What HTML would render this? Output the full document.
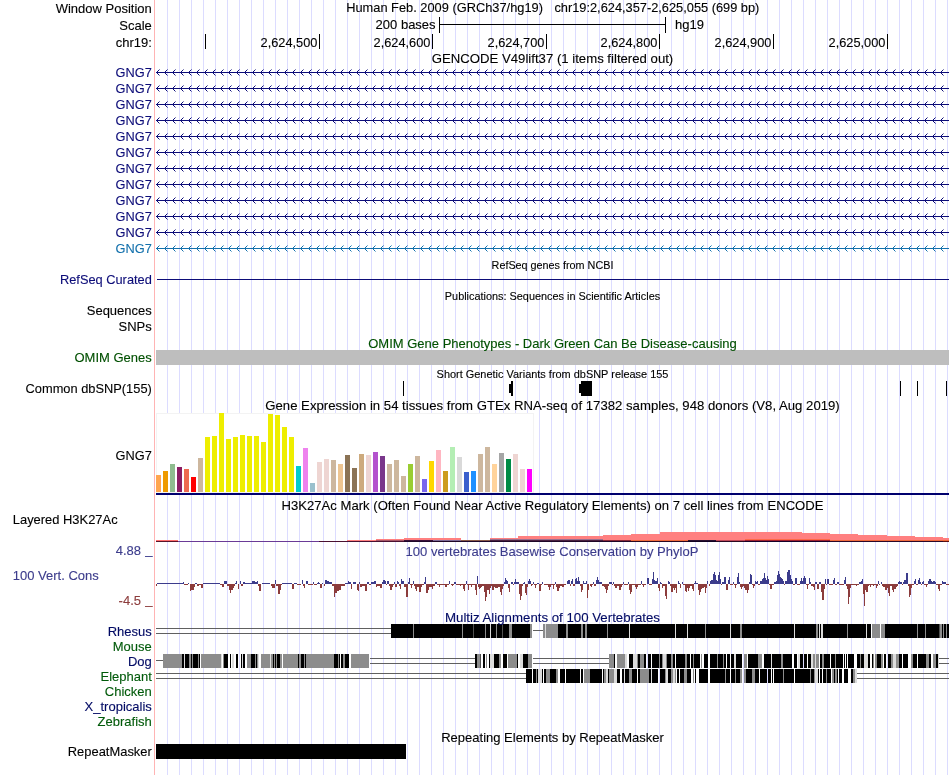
<!DOCTYPE html>
<html lang="en"><head><meta charset="utf-8"><title>UCSC Genome Browser - chr19:2,624,357-2,625,055</title>
<style>html,body{margin:0;padding:0;background:#fff}svg{display:block}text{font-family:"Liberation Sans", Arial, Helvetica, sans-serif;white-space:pre;stroke-width:0.12px}.c{shape-rendering:crispEdges}</style></head><body>
<svg width="950" height="775" viewBox="0 0 950 775">
<rect width="950" height="775" fill="#fff"/>
<g class="c">
<rect x="154" y="0" width="1" height="775" fill="#ffb4b4"/>
<path d="M167.5 0V775M179.5 0V775M191.5 0V775M203.5 0V775M215.5 0V775M227.5 0V775M239.5 0V775M251.5 0V775M263.5 0V775M275.5 0V775M287.5 0V775M299.5 0V775M311.5 0V775M323.5 0V775M335.5 0V775M347.5 0V775M359.5 0V775M371.5 0V775M383.5 0V775M395.5 0V775M407.5 0V775M419.5 0V775M431.5 0V775M443.5 0V775M455.5 0V775M467.5 0V775M479.5 0V775M491.5 0V775M503.5 0V775M515.5 0V775M527.5 0V775M539.5 0V775M551.5 0V775M563.5 0V775M575.5 0V775M587.5 0V775M599.5 0V775M611.5 0V775M623.5 0V775M635.5 0V775M647.5 0V775M659.5 0V775M671.5 0V775M683.5 0V775M695.5 0V775M707.5 0V775M719.5 0V775M731.5 0V775M743.5 0V775M755.5 0V775M767.5 0V775M779.5 0V775M791.5 0V775M803.5 0V775M815.5 0V775M827.5 0V775M839.5 0V775M851.5 0V775M863.5 0V775M875.5 0V775M887.5 0V775M899.5 0V775M911.5 0V775M923.5 0V775M935.5 0V775M947.5 0V775" stroke="#dcdcff" stroke-width="1" fill="none"/>
</g>
<g class="c">
<rect x="439" y="17" width="1" height="16" fill="#000"/>
<rect x="665" y="17" width="1" height="16" fill="#000"/>
<rect x="439" y="24" width="227" height="1" fill="#000"/>
<rect x="205" y="34" width="1" height="15" fill="#000"/>
<rect x="319" y="34" width="1" height="15" fill="#000"/>
<rect x="432" y="34" width="1" height="15" fill="#000"/>
<rect x="546" y="34" width="1" height="15" fill="#000"/>
<rect x="659" y="34" width="1" height="15" fill="#000"/>
<rect x="773" y="34" width="1" height="15" fill="#000"/>
<rect x="887" y="34" width="1" height="15" fill="#000"/>
</g>
<rect class="c" x="156" y="72" width="793" height="1" fill="#0c0c78"/>
<path d="M159.5 69.5L156.5 72.5L159.5 75.5M167.5 69.5L164.5 72.5L167.5 75.5M175.5 69.5L172.5 72.5L175.5 75.5M183.5 69.5L180.5 72.5L183.5 75.5M191.5 69.5L188.5 72.5L191.5 75.5M199.5 69.5L196.5 72.5L199.5 75.5M207.5 69.5L204.5 72.5L207.5 75.5M215.5 69.5L212.5 72.5L215.5 75.5M223.5 69.5L220.5 72.5L223.5 75.5M231.5 69.5L228.5 72.5L231.5 75.5M239.5 69.5L236.5 72.5L239.5 75.5M247.5 69.5L244.5 72.5L247.5 75.5M255.5 69.5L252.5 72.5L255.5 75.5M263.5 69.5L260.5 72.5L263.5 75.5M271.5 69.5L268.5 72.5L271.5 75.5M279.5 69.5L276.5 72.5L279.5 75.5M287.5 69.5L284.5 72.5L287.5 75.5M295.5 69.5L292.5 72.5L295.5 75.5M303.5 69.5L300.5 72.5L303.5 75.5M311.5 69.5L308.5 72.5L311.5 75.5M319.5 69.5L316.5 72.5L319.5 75.5M327.5 69.5L324.5 72.5L327.5 75.5M335.5 69.5L332.5 72.5L335.5 75.5M343.5 69.5L340.5 72.5L343.5 75.5M351.5 69.5L348.5 72.5L351.5 75.5M359.5 69.5L356.5 72.5L359.5 75.5M367.5 69.5L364.5 72.5L367.5 75.5M375.5 69.5L372.5 72.5L375.5 75.5M383.5 69.5L380.5 72.5L383.5 75.5M391.5 69.5L388.5 72.5L391.5 75.5M399.5 69.5L396.5 72.5L399.5 75.5M407.5 69.5L404.5 72.5L407.5 75.5M415.5 69.5L412.5 72.5L415.5 75.5M423.5 69.5L420.5 72.5L423.5 75.5M431.5 69.5L428.5 72.5L431.5 75.5M439.5 69.5L436.5 72.5L439.5 75.5M447.5 69.5L444.5 72.5L447.5 75.5M455.5 69.5L452.5 72.5L455.5 75.5M463.5 69.5L460.5 72.5L463.5 75.5M471.5 69.5L468.5 72.5L471.5 75.5M479.5 69.5L476.5 72.5L479.5 75.5M487.5 69.5L484.5 72.5L487.5 75.5M495.5 69.5L492.5 72.5L495.5 75.5M503.5 69.5L500.5 72.5L503.5 75.5M511.5 69.5L508.5 72.5L511.5 75.5M519.5 69.5L516.5 72.5L519.5 75.5M527.5 69.5L524.5 72.5L527.5 75.5M535.5 69.5L532.5 72.5L535.5 75.5M543.5 69.5L540.5 72.5L543.5 75.5M551.5 69.5L548.5 72.5L551.5 75.5M559.5 69.5L556.5 72.5L559.5 75.5M567.5 69.5L564.5 72.5L567.5 75.5M575.5 69.5L572.5 72.5L575.5 75.5M583.5 69.5L580.5 72.5L583.5 75.5M591.5 69.5L588.5 72.5L591.5 75.5M599.5 69.5L596.5 72.5L599.5 75.5M607.5 69.5L604.5 72.5L607.5 75.5M615.5 69.5L612.5 72.5L615.5 75.5M623.5 69.5L620.5 72.5L623.5 75.5M631.5 69.5L628.5 72.5L631.5 75.5M639.5 69.5L636.5 72.5L639.5 75.5M647.5 69.5L644.5 72.5L647.5 75.5M655.5 69.5L652.5 72.5L655.5 75.5M663.5 69.5L660.5 72.5L663.5 75.5M671.5 69.5L668.5 72.5L671.5 75.5M679.5 69.5L676.5 72.5L679.5 75.5M687.5 69.5L684.5 72.5L687.5 75.5M695.5 69.5L692.5 72.5L695.5 75.5M703.5 69.5L700.5 72.5L703.5 75.5M711.5 69.5L708.5 72.5L711.5 75.5M719.5 69.5L716.5 72.5L719.5 75.5M727.5 69.5L724.5 72.5L727.5 75.5M735.5 69.5L732.5 72.5L735.5 75.5M743.5 69.5L740.5 72.5L743.5 75.5M751.5 69.5L748.5 72.5L751.5 75.5M759.5 69.5L756.5 72.5L759.5 75.5M767.5 69.5L764.5 72.5L767.5 75.5M775.5 69.5L772.5 72.5L775.5 75.5M783.5 69.5L780.5 72.5L783.5 75.5M791.5 69.5L788.5 72.5L791.5 75.5M799.5 69.5L796.5 72.5L799.5 75.5M807.5 69.5L804.5 72.5L807.5 75.5M815.5 69.5L812.5 72.5L815.5 75.5M823.5 69.5L820.5 72.5L823.5 75.5M831.5 69.5L828.5 72.5L831.5 75.5M839.5 69.5L836.5 72.5L839.5 75.5M847.5 69.5L844.5 72.5L847.5 75.5M855.5 69.5L852.5 72.5L855.5 75.5M863.5 69.5L860.5 72.5L863.5 75.5M871.5 69.5L868.5 72.5L871.5 75.5M879.5 69.5L876.5 72.5L879.5 75.5M887.5 69.5L884.5 72.5L887.5 75.5M895.5 69.5L892.5 72.5L895.5 75.5M903.5 69.5L900.5 72.5L903.5 75.5M911.5 69.5L908.5 72.5L911.5 75.5M919.5 69.5L916.5 72.5L919.5 75.5M927.5 69.5L924.5 72.5L927.5 75.5M935.5 69.5L932.5 72.5L935.5 75.5M943.5 69.5L940.5 72.5L943.5 75.5" stroke="#0c0c78" stroke-width="1" fill="none"/>
<rect class="c" x="156" y="88" width="793" height="1" fill="#0c0c78"/>
<path d="M159.5 85.5L156.5 88.5L159.5 91.5M167.5 85.5L164.5 88.5L167.5 91.5M175.5 85.5L172.5 88.5L175.5 91.5M183.5 85.5L180.5 88.5L183.5 91.5M191.5 85.5L188.5 88.5L191.5 91.5M199.5 85.5L196.5 88.5L199.5 91.5M207.5 85.5L204.5 88.5L207.5 91.5M215.5 85.5L212.5 88.5L215.5 91.5M223.5 85.5L220.5 88.5L223.5 91.5M231.5 85.5L228.5 88.5L231.5 91.5M239.5 85.5L236.5 88.5L239.5 91.5M247.5 85.5L244.5 88.5L247.5 91.5M255.5 85.5L252.5 88.5L255.5 91.5M263.5 85.5L260.5 88.5L263.5 91.5M271.5 85.5L268.5 88.5L271.5 91.5M279.5 85.5L276.5 88.5L279.5 91.5M287.5 85.5L284.5 88.5L287.5 91.5M295.5 85.5L292.5 88.5L295.5 91.5M303.5 85.5L300.5 88.5L303.5 91.5M311.5 85.5L308.5 88.5L311.5 91.5M319.5 85.5L316.5 88.5L319.5 91.5M327.5 85.5L324.5 88.5L327.5 91.5M335.5 85.5L332.5 88.5L335.5 91.5M343.5 85.5L340.5 88.5L343.5 91.5M351.5 85.5L348.5 88.5L351.5 91.5M359.5 85.5L356.5 88.5L359.5 91.5M367.5 85.5L364.5 88.5L367.5 91.5M375.5 85.5L372.5 88.5L375.5 91.5M383.5 85.5L380.5 88.5L383.5 91.5M391.5 85.5L388.5 88.5L391.5 91.5M399.5 85.5L396.5 88.5L399.5 91.5M407.5 85.5L404.5 88.5L407.5 91.5M415.5 85.5L412.5 88.5L415.5 91.5M423.5 85.5L420.5 88.5L423.5 91.5M431.5 85.5L428.5 88.5L431.5 91.5M439.5 85.5L436.5 88.5L439.5 91.5M447.5 85.5L444.5 88.5L447.5 91.5M455.5 85.5L452.5 88.5L455.5 91.5M463.5 85.5L460.5 88.5L463.5 91.5M471.5 85.5L468.5 88.5L471.5 91.5M479.5 85.5L476.5 88.5L479.5 91.5M487.5 85.5L484.5 88.5L487.5 91.5M495.5 85.5L492.5 88.5L495.5 91.5M503.5 85.5L500.5 88.5L503.5 91.5M511.5 85.5L508.5 88.5L511.5 91.5M519.5 85.5L516.5 88.5L519.5 91.5M527.5 85.5L524.5 88.5L527.5 91.5M535.5 85.5L532.5 88.5L535.5 91.5M543.5 85.5L540.5 88.5L543.5 91.5M551.5 85.5L548.5 88.5L551.5 91.5M559.5 85.5L556.5 88.5L559.5 91.5M567.5 85.5L564.5 88.5L567.5 91.5M575.5 85.5L572.5 88.5L575.5 91.5M583.5 85.5L580.5 88.5L583.5 91.5M591.5 85.5L588.5 88.5L591.5 91.5M599.5 85.5L596.5 88.5L599.5 91.5M607.5 85.5L604.5 88.5L607.5 91.5M615.5 85.5L612.5 88.5L615.5 91.5M623.5 85.5L620.5 88.5L623.5 91.5M631.5 85.5L628.5 88.5L631.5 91.5M639.5 85.5L636.5 88.5L639.5 91.5M647.5 85.5L644.5 88.5L647.5 91.5M655.5 85.5L652.5 88.5L655.5 91.5M663.5 85.5L660.5 88.5L663.5 91.5M671.5 85.5L668.5 88.5L671.5 91.5M679.5 85.5L676.5 88.5L679.5 91.5M687.5 85.5L684.5 88.5L687.5 91.5M695.5 85.5L692.5 88.5L695.5 91.5M703.5 85.5L700.5 88.5L703.5 91.5M711.5 85.5L708.5 88.5L711.5 91.5M719.5 85.5L716.5 88.5L719.5 91.5M727.5 85.5L724.5 88.5L727.5 91.5M735.5 85.5L732.5 88.5L735.5 91.5M743.5 85.5L740.5 88.5L743.5 91.5M751.5 85.5L748.5 88.5L751.5 91.5M759.5 85.5L756.5 88.5L759.5 91.5M767.5 85.5L764.5 88.5L767.5 91.5M775.5 85.5L772.5 88.5L775.5 91.5M783.5 85.5L780.5 88.5L783.5 91.5M791.5 85.5L788.5 88.5L791.5 91.5M799.5 85.5L796.5 88.5L799.5 91.5M807.5 85.5L804.5 88.5L807.5 91.5M815.5 85.5L812.5 88.5L815.5 91.5M823.5 85.5L820.5 88.5L823.5 91.5M831.5 85.5L828.5 88.5L831.5 91.5M839.5 85.5L836.5 88.5L839.5 91.5M847.5 85.5L844.5 88.5L847.5 91.5M855.5 85.5L852.5 88.5L855.5 91.5M863.5 85.5L860.5 88.5L863.5 91.5M871.5 85.5L868.5 88.5L871.5 91.5M879.5 85.5L876.5 88.5L879.5 91.5M887.5 85.5L884.5 88.5L887.5 91.5M895.5 85.5L892.5 88.5L895.5 91.5M903.5 85.5L900.5 88.5L903.5 91.5M911.5 85.5L908.5 88.5L911.5 91.5M919.5 85.5L916.5 88.5L919.5 91.5M927.5 85.5L924.5 88.5L927.5 91.5M935.5 85.5L932.5 88.5L935.5 91.5M943.5 85.5L940.5 88.5L943.5 91.5" stroke="#0c0c78" stroke-width="1" fill="none"/>
<rect class="c" x="156" y="104" width="793" height="1" fill="#0c0c78"/>
<path d="M159.5 101.5L156.5 104.5L159.5 107.5M167.5 101.5L164.5 104.5L167.5 107.5M175.5 101.5L172.5 104.5L175.5 107.5M183.5 101.5L180.5 104.5L183.5 107.5M191.5 101.5L188.5 104.5L191.5 107.5M199.5 101.5L196.5 104.5L199.5 107.5M207.5 101.5L204.5 104.5L207.5 107.5M215.5 101.5L212.5 104.5L215.5 107.5M223.5 101.5L220.5 104.5L223.5 107.5M231.5 101.5L228.5 104.5L231.5 107.5M239.5 101.5L236.5 104.5L239.5 107.5M247.5 101.5L244.5 104.5L247.5 107.5M255.5 101.5L252.5 104.5L255.5 107.5M263.5 101.5L260.5 104.5L263.5 107.5M271.5 101.5L268.5 104.5L271.5 107.5M279.5 101.5L276.5 104.5L279.5 107.5M287.5 101.5L284.5 104.5L287.5 107.5M295.5 101.5L292.5 104.5L295.5 107.5M303.5 101.5L300.5 104.5L303.5 107.5M311.5 101.5L308.5 104.5L311.5 107.5M319.5 101.5L316.5 104.5L319.5 107.5M327.5 101.5L324.5 104.5L327.5 107.5M335.5 101.5L332.5 104.5L335.5 107.5M343.5 101.5L340.5 104.5L343.5 107.5M351.5 101.5L348.5 104.5L351.5 107.5M359.5 101.5L356.5 104.5L359.5 107.5M367.5 101.5L364.5 104.5L367.5 107.5M375.5 101.5L372.5 104.5L375.5 107.5M383.5 101.5L380.5 104.5L383.5 107.5M391.5 101.5L388.5 104.5L391.5 107.5M399.5 101.5L396.5 104.5L399.5 107.5M407.5 101.5L404.5 104.5L407.5 107.5M415.5 101.5L412.5 104.5L415.5 107.5M423.5 101.5L420.5 104.5L423.5 107.5M431.5 101.5L428.5 104.5L431.5 107.5M439.5 101.5L436.5 104.5L439.5 107.5M447.5 101.5L444.5 104.5L447.5 107.5M455.5 101.5L452.5 104.5L455.5 107.5M463.5 101.5L460.5 104.5L463.5 107.5M471.5 101.5L468.5 104.5L471.5 107.5M479.5 101.5L476.5 104.5L479.5 107.5M487.5 101.5L484.5 104.5L487.5 107.5M495.5 101.5L492.5 104.5L495.5 107.5M503.5 101.5L500.5 104.5L503.5 107.5M511.5 101.5L508.5 104.5L511.5 107.5M519.5 101.5L516.5 104.5L519.5 107.5M527.5 101.5L524.5 104.5L527.5 107.5M535.5 101.5L532.5 104.5L535.5 107.5M543.5 101.5L540.5 104.5L543.5 107.5M551.5 101.5L548.5 104.5L551.5 107.5M559.5 101.5L556.5 104.5L559.5 107.5M567.5 101.5L564.5 104.5L567.5 107.5M575.5 101.5L572.5 104.5L575.5 107.5M583.5 101.5L580.5 104.5L583.5 107.5M591.5 101.5L588.5 104.5L591.5 107.5M599.5 101.5L596.5 104.5L599.5 107.5M607.5 101.5L604.5 104.5L607.5 107.5M615.5 101.5L612.5 104.5L615.5 107.5M623.5 101.5L620.5 104.5L623.5 107.5M631.5 101.5L628.5 104.5L631.5 107.5M639.5 101.5L636.5 104.5L639.5 107.5M647.5 101.5L644.5 104.5L647.5 107.5M655.5 101.5L652.5 104.5L655.5 107.5M663.5 101.5L660.5 104.5L663.5 107.5M671.5 101.5L668.5 104.5L671.5 107.5M679.5 101.5L676.5 104.5L679.5 107.5M687.5 101.5L684.5 104.5L687.5 107.5M695.5 101.5L692.5 104.5L695.5 107.5M703.5 101.5L700.5 104.5L703.5 107.5M711.5 101.5L708.5 104.5L711.5 107.5M719.5 101.5L716.5 104.5L719.5 107.5M727.5 101.5L724.5 104.5L727.5 107.5M735.5 101.5L732.5 104.5L735.5 107.5M743.5 101.5L740.5 104.5L743.5 107.5M751.5 101.5L748.5 104.5L751.5 107.5M759.5 101.5L756.5 104.5L759.5 107.5M767.5 101.5L764.5 104.5L767.5 107.5M775.5 101.5L772.5 104.5L775.5 107.5M783.5 101.5L780.5 104.5L783.5 107.5M791.5 101.5L788.5 104.5L791.5 107.5M799.5 101.5L796.5 104.5L799.5 107.5M807.5 101.5L804.5 104.5L807.5 107.5M815.5 101.5L812.5 104.5L815.5 107.5M823.5 101.5L820.5 104.5L823.5 107.5M831.5 101.5L828.5 104.5L831.5 107.5M839.5 101.5L836.5 104.5L839.5 107.5M847.5 101.5L844.5 104.5L847.5 107.5M855.5 101.5L852.5 104.5L855.5 107.5M863.5 101.5L860.5 104.5L863.5 107.5M871.5 101.5L868.5 104.5L871.5 107.5M879.5 101.5L876.5 104.5L879.5 107.5M887.5 101.5L884.5 104.5L887.5 107.5M895.5 101.5L892.5 104.5L895.5 107.5M903.5 101.5L900.5 104.5L903.5 107.5M911.5 101.5L908.5 104.5L911.5 107.5M919.5 101.5L916.5 104.5L919.5 107.5M927.5 101.5L924.5 104.5L927.5 107.5M935.5 101.5L932.5 104.5L935.5 107.5M943.5 101.5L940.5 104.5L943.5 107.5" stroke="#0c0c78" stroke-width="1" fill="none"/>
<rect class="c" x="156" y="120" width="793" height="1" fill="#0c0c78"/>
<path d="M159.5 117.5L156.5 120.5L159.5 123.5M167.5 117.5L164.5 120.5L167.5 123.5M175.5 117.5L172.5 120.5L175.5 123.5M183.5 117.5L180.5 120.5L183.5 123.5M191.5 117.5L188.5 120.5L191.5 123.5M199.5 117.5L196.5 120.5L199.5 123.5M207.5 117.5L204.5 120.5L207.5 123.5M215.5 117.5L212.5 120.5L215.5 123.5M223.5 117.5L220.5 120.5L223.5 123.5M231.5 117.5L228.5 120.5L231.5 123.5M239.5 117.5L236.5 120.5L239.5 123.5M247.5 117.5L244.5 120.5L247.5 123.5M255.5 117.5L252.5 120.5L255.5 123.5M263.5 117.5L260.5 120.5L263.5 123.5M271.5 117.5L268.5 120.5L271.5 123.5M279.5 117.5L276.5 120.5L279.5 123.5M287.5 117.5L284.5 120.5L287.5 123.5M295.5 117.5L292.5 120.5L295.5 123.5M303.5 117.5L300.5 120.5L303.5 123.5M311.5 117.5L308.5 120.5L311.5 123.5M319.5 117.5L316.5 120.5L319.5 123.5M327.5 117.5L324.5 120.5L327.5 123.5M335.5 117.5L332.5 120.5L335.5 123.5M343.5 117.5L340.5 120.5L343.5 123.5M351.5 117.5L348.5 120.5L351.5 123.5M359.5 117.5L356.5 120.5L359.5 123.5M367.5 117.5L364.5 120.5L367.5 123.5M375.5 117.5L372.5 120.5L375.5 123.5M383.5 117.5L380.5 120.5L383.5 123.5M391.5 117.5L388.5 120.5L391.5 123.5M399.5 117.5L396.5 120.5L399.5 123.5M407.5 117.5L404.5 120.5L407.5 123.5M415.5 117.5L412.5 120.5L415.5 123.5M423.5 117.5L420.5 120.5L423.5 123.5M431.5 117.5L428.5 120.5L431.5 123.5M439.5 117.5L436.5 120.5L439.5 123.5M447.5 117.5L444.5 120.5L447.5 123.5M455.5 117.5L452.5 120.5L455.5 123.5M463.5 117.5L460.5 120.5L463.5 123.5M471.5 117.5L468.5 120.5L471.5 123.5M479.5 117.5L476.5 120.5L479.5 123.5M487.5 117.5L484.5 120.5L487.5 123.5M495.5 117.5L492.5 120.5L495.5 123.5M503.5 117.5L500.5 120.5L503.5 123.5M511.5 117.5L508.5 120.5L511.5 123.5M519.5 117.5L516.5 120.5L519.5 123.5M527.5 117.5L524.5 120.5L527.5 123.5M535.5 117.5L532.5 120.5L535.5 123.5M543.5 117.5L540.5 120.5L543.5 123.5M551.5 117.5L548.5 120.5L551.5 123.5M559.5 117.5L556.5 120.5L559.5 123.5M567.5 117.5L564.5 120.5L567.5 123.5M575.5 117.5L572.5 120.5L575.5 123.5M583.5 117.5L580.5 120.5L583.5 123.5M591.5 117.5L588.5 120.5L591.5 123.5M599.5 117.5L596.5 120.5L599.5 123.5M607.5 117.5L604.5 120.5L607.5 123.5M615.5 117.5L612.5 120.5L615.5 123.5M623.5 117.5L620.5 120.5L623.5 123.5M631.5 117.5L628.5 120.5L631.5 123.5M639.5 117.5L636.5 120.5L639.5 123.5M647.5 117.5L644.5 120.5L647.5 123.5M655.5 117.5L652.5 120.5L655.5 123.5M663.5 117.5L660.5 120.5L663.5 123.5M671.5 117.5L668.5 120.5L671.5 123.5M679.5 117.5L676.5 120.5L679.5 123.5M687.5 117.5L684.5 120.5L687.5 123.5M695.5 117.5L692.5 120.5L695.5 123.5M703.5 117.5L700.5 120.5L703.5 123.5M711.5 117.5L708.5 120.5L711.5 123.5M719.5 117.5L716.5 120.5L719.5 123.5M727.5 117.5L724.5 120.5L727.5 123.5M735.5 117.5L732.5 120.5L735.5 123.5M743.5 117.5L740.5 120.5L743.5 123.5M751.5 117.5L748.5 120.5L751.5 123.5M759.5 117.5L756.5 120.5L759.5 123.5M767.5 117.5L764.5 120.5L767.5 123.5M775.5 117.5L772.5 120.5L775.5 123.5M783.5 117.5L780.5 120.5L783.5 123.5M791.5 117.5L788.5 120.5L791.5 123.5M799.5 117.5L796.5 120.5L799.5 123.5M807.5 117.5L804.5 120.5L807.5 123.5M815.5 117.5L812.5 120.5L815.5 123.5M823.5 117.5L820.5 120.5L823.5 123.5M831.5 117.5L828.5 120.5L831.5 123.5M839.5 117.5L836.5 120.5L839.5 123.5M847.5 117.5L844.5 120.5L847.5 123.5M855.5 117.5L852.5 120.5L855.5 123.5M863.5 117.5L860.5 120.5L863.5 123.5M871.5 117.5L868.5 120.5L871.5 123.5M879.5 117.5L876.5 120.5L879.5 123.5M887.5 117.5L884.5 120.5L887.5 123.5M895.5 117.5L892.5 120.5L895.5 123.5M903.5 117.5L900.5 120.5L903.5 123.5M911.5 117.5L908.5 120.5L911.5 123.5M919.5 117.5L916.5 120.5L919.5 123.5M927.5 117.5L924.5 120.5L927.5 123.5M935.5 117.5L932.5 120.5L935.5 123.5M943.5 117.5L940.5 120.5L943.5 123.5" stroke="#0c0c78" stroke-width="1" fill="none"/>
<rect class="c" x="156" y="136" width="793" height="1" fill="#0c0c78"/>
<path d="M159.5 133.5L156.5 136.5L159.5 139.5M167.5 133.5L164.5 136.5L167.5 139.5M175.5 133.5L172.5 136.5L175.5 139.5M183.5 133.5L180.5 136.5L183.5 139.5M191.5 133.5L188.5 136.5L191.5 139.5M199.5 133.5L196.5 136.5L199.5 139.5M207.5 133.5L204.5 136.5L207.5 139.5M215.5 133.5L212.5 136.5L215.5 139.5M223.5 133.5L220.5 136.5L223.5 139.5M231.5 133.5L228.5 136.5L231.5 139.5M239.5 133.5L236.5 136.5L239.5 139.5M247.5 133.5L244.5 136.5L247.5 139.5M255.5 133.5L252.5 136.5L255.5 139.5M263.5 133.5L260.5 136.5L263.5 139.5M271.5 133.5L268.5 136.5L271.5 139.5M279.5 133.5L276.5 136.5L279.5 139.5M287.5 133.5L284.5 136.5L287.5 139.5M295.5 133.5L292.5 136.5L295.5 139.5M303.5 133.5L300.5 136.5L303.5 139.5M311.5 133.5L308.5 136.5L311.5 139.5M319.5 133.5L316.5 136.5L319.5 139.5M327.5 133.5L324.5 136.5L327.5 139.5M335.5 133.5L332.5 136.5L335.5 139.5M343.5 133.5L340.5 136.5L343.5 139.5M351.5 133.5L348.5 136.5L351.5 139.5M359.5 133.5L356.5 136.5L359.5 139.5M367.5 133.5L364.5 136.5L367.5 139.5M375.5 133.5L372.5 136.5L375.5 139.5M383.5 133.5L380.5 136.5L383.5 139.5M391.5 133.5L388.5 136.5L391.5 139.5M399.5 133.5L396.5 136.5L399.5 139.5M407.5 133.5L404.5 136.5L407.5 139.5M415.5 133.5L412.5 136.5L415.5 139.5M423.5 133.5L420.5 136.5L423.5 139.5M431.5 133.5L428.5 136.5L431.5 139.5M439.5 133.5L436.5 136.5L439.5 139.5M447.5 133.5L444.5 136.5L447.5 139.5M455.5 133.5L452.5 136.5L455.5 139.5M463.5 133.5L460.5 136.5L463.5 139.5M471.5 133.5L468.5 136.5L471.5 139.5M479.5 133.5L476.5 136.5L479.5 139.5M487.5 133.5L484.5 136.5L487.5 139.5M495.5 133.5L492.5 136.5L495.5 139.5M503.5 133.5L500.5 136.5L503.5 139.5M511.5 133.5L508.5 136.5L511.5 139.5M519.5 133.5L516.5 136.5L519.5 139.5M527.5 133.5L524.5 136.5L527.5 139.5M535.5 133.5L532.5 136.5L535.5 139.5M543.5 133.5L540.5 136.5L543.5 139.5M551.5 133.5L548.5 136.5L551.5 139.5M559.5 133.5L556.5 136.5L559.5 139.5M567.5 133.5L564.5 136.5L567.5 139.5M575.5 133.5L572.5 136.5L575.5 139.5M583.5 133.5L580.5 136.5L583.5 139.5M591.5 133.5L588.5 136.5L591.5 139.5M599.5 133.5L596.5 136.5L599.5 139.5M607.5 133.5L604.5 136.5L607.5 139.5M615.5 133.5L612.5 136.5L615.5 139.5M623.5 133.5L620.5 136.5L623.5 139.5M631.5 133.5L628.5 136.5L631.5 139.5M639.5 133.5L636.5 136.5L639.5 139.5M647.5 133.5L644.5 136.5L647.5 139.5M655.5 133.5L652.5 136.5L655.5 139.5M663.5 133.5L660.5 136.5L663.5 139.5M671.5 133.5L668.5 136.5L671.5 139.5M679.5 133.5L676.5 136.5L679.5 139.5M687.5 133.5L684.5 136.5L687.5 139.5M695.5 133.5L692.5 136.5L695.5 139.5M703.5 133.5L700.5 136.5L703.5 139.5M711.5 133.5L708.5 136.5L711.5 139.5M719.5 133.5L716.5 136.5L719.5 139.5M727.5 133.5L724.5 136.5L727.5 139.5M735.5 133.5L732.5 136.5L735.5 139.5M743.5 133.5L740.5 136.5L743.5 139.5M751.5 133.5L748.5 136.5L751.5 139.5M759.5 133.5L756.5 136.5L759.5 139.5M767.5 133.5L764.5 136.5L767.5 139.5M775.5 133.5L772.5 136.5L775.5 139.5M783.5 133.5L780.5 136.5L783.5 139.5M791.5 133.5L788.5 136.5L791.5 139.5M799.5 133.5L796.5 136.5L799.5 139.5M807.5 133.5L804.5 136.5L807.5 139.5M815.5 133.5L812.5 136.5L815.5 139.5M823.5 133.5L820.5 136.5L823.5 139.5M831.5 133.5L828.5 136.5L831.5 139.5M839.5 133.5L836.5 136.5L839.5 139.5M847.5 133.5L844.5 136.5L847.5 139.5M855.5 133.5L852.5 136.5L855.5 139.5M863.5 133.5L860.5 136.5L863.5 139.5M871.5 133.5L868.5 136.5L871.5 139.5M879.5 133.5L876.5 136.5L879.5 139.5M887.5 133.5L884.5 136.5L887.5 139.5M895.5 133.5L892.5 136.5L895.5 139.5M903.5 133.5L900.5 136.5L903.5 139.5M911.5 133.5L908.5 136.5L911.5 139.5M919.5 133.5L916.5 136.5L919.5 139.5M927.5 133.5L924.5 136.5L927.5 139.5M935.5 133.5L932.5 136.5L935.5 139.5M943.5 133.5L940.5 136.5L943.5 139.5" stroke="#0c0c78" stroke-width="1" fill="none"/>
<rect class="c" x="156" y="152" width="793" height="1" fill="#0c0c78"/>
<path d="M159.5 149.5L156.5 152.5L159.5 155.5M167.5 149.5L164.5 152.5L167.5 155.5M175.5 149.5L172.5 152.5L175.5 155.5M183.5 149.5L180.5 152.5L183.5 155.5M191.5 149.5L188.5 152.5L191.5 155.5M199.5 149.5L196.5 152.5L199.5 155.5M207.5 149.5L204.5 152.5L207.5 155.5M215.5 149.5L212.5 152.5L215.5 155.5M223.5 149.5L220.5 152.5L223.5 155.5M231.5 149.5L228.5 152.5L231.5 155.5M239.5 149.5L236.5 152.5L239.5 155.5M247.5 149.5L244.5 152.5L247.5 155.5M255.5 149.5L252.5 152.5L255.5 155.5M263.5 149.5L260.5 152.5L263.5 155.5M271.5 149.5L268.5 152.5L271.5 155.5M279.5 149.5L276.5 152.5L279.5 155.5M287.5 149.5L284.5 152.5L287.5 155.5M295.5 149.5L292.5 152.5L295.5 155.5M303.5 149.5L300.5 152.5L303.5 155.5M311.5 149.5L308.5 152.5L311.5 155.5M319.5 149.5L316.5 152.5L319.5 155.5M327.5 149.5L324.5 152.5L327.5 155.5M335.5 149.5L332.5 152.5L335.5 155.5M343.5 149.5L340.5 152.5L343.5 155.5M351.5 149.5L348.5 152.5L351.5 155.5M359.5 149.5L356.5 152.5L359.5 155.5M367.5 149.5L364.5 152.5L367.5 155.5M375.5 149.5L372.5 152.5L375.5 155.5M383.5 149.5L380.5 152.5L383.5 155.5M391.5 149.5L388.5 152.5L391.5 155.5M399.5 149.5L396.5 152.5L399.5 155.5M407.5 149.5L404.5 152.5L407.5 155.5M415.5 149.5L412.5 152.5L415.5 155.5M423.5 149.5L420.5 152.5L423.5 155.5M431.5 149.5L428.5 152.5L431.5 155.5M439.5 149.5L436.5 152.5L439.5 155.5M447.5 149.5L444.5 152.5L447.5 155.5M455.5 149.5L452.5 152.5L455.5 155.5M463.5 149.5L460.5 152.5L463.5 155.5M471.5 149.5L468.5 152.5L471.5 155.5M479.5 149.5L476.5 152.5L479.5 155.5M487.5 149.5L484.5 152.5L487.5 155.5M495.5 149.5L492.5 152.5L495.5 155.5M503.5 149.5L500.5 152.5L503.5 155.5M511.5 149.5L508.5 152.5L511.5 155.5M519.5 149.5L516.5 152.5L519.5 155.5M527.5 149.5L524.5 152.5L527.5 155.5M535.5 149.5L532.5 152.5L535.5 155.5M543.5 149.5L540.5 152.5L543.5 155.5M551.5 149.5L548.5 152.5L551.5 155.5M559.5 149.5L556.5 152.5L559.5 155.5M567.5 149.5L564.5 152.5L567.5 155.5M575.5 149.5L572.5 152.5L575.5 155.5M583.5 149.5L580.5 152.5L583.5 155.5M591.5 149.5L588.5 152.5L591.5 155.5M599.5 149.5L596.5 152.5L599.5 155.5M607.5 149.5L604.5 152.5L607.5 155.5M615.5 149.5L612.5 152.5L615.5 155.5M623.5 149.5L620.5 152.5L623.5 155.5M631.5 149.5L628.5 152.5L631.5 155.5M639.5 149.5L636.5 152.5L639.5 155.5M647.5 149.5L644.5 152.5L647.5 155.5M655.5 149.5L652.5 152.5L655.5 155.5M663.5 149.5L660.5 152.5L663.5 155.5M671.5 149.5L668.5 152.5L671.5 155.5M679.5 149.5L676.5 152.5L679.5 155.5M687.5 149.5L684.5 152.5L687.5 155.5M695.5 149.5L692.5 152.5L695.5 155.5M703.5 149.5L700.5 152.5L703.5 155.5M711.5 149.5L708.5 152.5L711.5 155.5M719.5 149.5L716.5 152.5L719.5 155.5M727.5 149.5L724.5 152.5L727.5 155.5M735.5 149.5L732.5 152.5L735.5 155.5M743.5 149.5L740.5 152.5L743.5 155.5M751.5 149.5L748.5 152.5L751.5 155.5M759.5 149.5L756.5 152.5L759.5 155.5M767.5 149.5L764.5 152.5L767.5 155.5M775.5 149.5L772.5 152.5L775.5 155.5M783.5 149.5L780.5 152.5L783.5 155.5M791.5 149.5L788.5 152.5L791.5 155.5M799.5 149.5L796.5 152.5L799.5 155.5M807.5 149.5L804.5 152.5L807.5 155.5M815.5 149.5L812.5 152.5L815.5 155.5M823.5 149.5L820.5 152.5L823.5 155.5M831.5 149.5L828.5 152.5L831.5 155.5M839.5 149.5L836.5 152.5L839.5 155.5M847.5 149.5L844.5 152.5L847.5 155.5M855.5 149.5L852.5 152.5L855.5 155.5M863.5 149.5L860.5 152.5L863.5 155.5M871.5 149.5L868.5 152.5L871.5 155.5M879.5 149.5L876.5 152.5L879.5 155.5M887.5 149.5L884.5 152.5L887.5 155.5M895.5 149.5L892.5 152.5L895.5 155.5M903.5 149.5L900.5 152.5L903.5 155.5M911.5 149.5L908.5 152.5L911.5 155.5M919.5 149.5L916.5 152.5L919.5 155.5M927.5 149.5L924.5 152.5L927.5 155.5M935.5 149.5L932.5 152.5L935.5 155.5M943.5 149.5L940.5 152.5L943.5 155.5" stroke="#0c0c78" stroke-width="1" fill="none"/>
<rect class="c" x="156" y="168" width="793" height="1" fill="#0c0c78"/>
<path d="M159.5 165.5L156.5 168.5L159.5 171.5M167.5 165.5L164.5 168.5L167.5 171.5M175.5 165.5L172.5 168.5L175.5 171.5M183.5 165.5L180.5 168.5L183.5 171.5M191.5 165.5L188.5 168.5L191.5 171.5M199.5 165.5L196.5 168.5L199.5 171.5M207.5 165.5L204.5 168.5L207.5 171.5M215.5 165.5L212.5 168.5L215.5 171.5M223.5 165.5L220.5 168.5L223.5 171.5M231.5 165.5L228.5 168.5L231.5 171.5M239.5 165.5L236.5 168.5L239.5 171.5M247.5 165.5L244.5 168.5L247.5 171.5M255.5 165.5L252.5 168.5L255.5 171.5M263.5 165.5L260.5 168.5L263.5 171.5M271.5 165.5L268.5 168.5L271.5 171.5M279.5 165.5L276.5 168.5L279.5 171.5M287.5 165.5L284.5 168.5L287.5 171.5M295.5 165.5L292.5 168.5L295.5 171.5M303.5 165.5L300.5 168.5L303.5 171.5M311.5 165.5L308.5 168.5L311.5 171.5M319.5 165.5L316.5 168.5L319.5 171.5M327.5 165.5L324.5 168.5L327.5 171.5M335.5 165.5L332.5 168.5L335.5 171.5M343.5 165.5L340.5 168.5L343.5 171.5M351.5 165.5L348.5 168.5L351.5 171.5M359.5 165.5L356.5 168.5L359.5 171.5M367.5 165.5L364.5 168.5L367.5 171.5M375.5 165.5L372.5 168.5L375.5 171.5M383.5 165.5L380.5 168.5L383.5 171.5M391.5 165.5L388.5 168.5L391.5 171.5M399.5 165.5L396.5 168.5L399.5 171.5M407.5 165.5L404.5 168.5L407.5 171.5M415.5 165.5L412.5 168.5L415.5 171.5M423.5 165.5L420.5 168.5L423.5 171.5M431.5 165.5L428.5 168.5L431.5 171.5M439.5 165.5L436.5 168.5L439.5 171.5M447.5 165.5L444.5 168.5L447.5 171.5M455.5 165.5L452.5 168.5L455.5 171.5M463.5 165.5L460.5 168.5L463.5 171.5M471.5 165.5L468.5 168.5L471.5 171.5M479.5 165.5L476.5 168.5L479.5 171.5M487.5 165.5L484.5 168.5L487.5 171.5M495.5 165.5L492.5 168.5L495.5 171.5M503.5 165.5L500.5 168.5L503.5 171.5M511.5 165.5L508.5 168.5L511.5 171.5M519.5 165.5L516.5 168.5L519.5 171.5M527.5 165.5L524.5 168.5L527.5 171.5M535.5 165.5L532.5 168.5L535.5 171.5M543.5 165.5L540.5 168.5L543.5 171.5M551.5 165.5L548.5 168.5L551.5 171.5M559.5 165.5L556.5 168.5L559.5 171.5M567.5 165.5L564.5 168.5L567.5 171.5M575.5 165.5L572.5 168.5L575.5 171.5M583.5 165.5L580.5 168.5L583.5 171.5M591.5 165.5L588.5 168.5L591.5 171.5M599.5 165.5L596.5 168.5L599.5 171.5M607.5 165.5L604.5 168.5L607.5 171.5M615.5 165.5L612.5 168.5L615.5 171.5M623.5 165.5L620.5 168.5L623.5 171.5M631.5 165.5L628.5 168.5L631.5 171.5M639.5 165.5L636.5 168.5L639.5 171.5M647.5 165.5L644.5 168.5L647.5 171.5M655.5 165.5L652.5 168.5L655.5 171.5M663.5 165.5L660.5 168.5L663.5 171.5M671.5 165.5L668.5 168.5L671.5 171.5M679.5 165.5L676.5 168.5L679.5 171.5M687.5 165.5L684.5 168.5L687.5 171.5M695.5 165.5L692.5 168.5L695.5 171.5M703.5 165.5L700.5 168.5L703.5 171.5M711.5 165.5L708.5 168.5L711.5 171.5M719.5 165.5L716.5 168.5L719.5 171.5M727.5 165.5L724.5 168.5L727.5 171.5M735.5 165.5L732.5 168.5L735.5 171.5M743.5 165.5L740.5 168.5L743.5 171.5M751.5 165.5L748.5 168.5L751.5 171.5M759.5 165.5L756.5 168.5L759.5 171.5M767.5 165.5L764.5 168.5L767.5 171.5M775.5 165.5L772.5 168.5L775.5 171.5M783.5 165.5L780.5 168.5L783.5 171.5M791.5 165.5L788.5 168.5L791.5 171.5M799.5 165.5L796.5 168.5L799.5 171.5M807.5 165.5L804.5 168.5L807.5 171.5M815.5 165.5L812.5 168.5L815.5 171.5M823.5 165.5L820.5 168.5L823.5 171.5M831.5 165.5L828.5 168.5L831.5 171.5M839.5 165.5L836.5 168.5L839.5 171.5M847.5 165.5L844.5 168.5L847.5 171.5M855.5 165.5L852.5 168.5L855.5 171.5M863.5 165.5L860.5 168.5L863.5 171.5M871.5 165.5L868.5 168.5L871.5 171.5M879.5 165.5L876.5 168.5L879.5 171.5M887.5 165.5L884.5 168.5L887.5 171.5M895.5 165.5L892.5 168.5L895.5 171.5M903.5 165.5L900.5 168.5L903.5 171.5M911.5 165.5L908.5 168.5L911.5 171.5M919.5 165.5L916.5 168.5L919.5 171.5M927.5 165.5L924.5 168.5L927.5 171.5M935.5 165.5L932.5 168.5L935.5 171.5M943.5 165.5L940.5 168.5L943.5 171.5" stroke="#0c0c78" stroke-width="1" fill="none"/>
<rect class="c" x="156" y="184" width="793" height="1" fill="#0c0c78"/>
<path d="M159.5 181.5L156.5 184.5L159.5 187.5M167.5 181.5L164.5 184.5L167.5 187.5M175.5 181.5L172.5 184.5L175.5 187.5M183.5 181.5L180.5 184.5L183.5 187.5M191.5 181.5L188.5 184.5L191.5 187.5M199.5 181.5L196.5 184.5L199.5 187.5M207.5 181.5L204.5 184.5L207.5 187.5M215.5 181.5L212.5 184.5L215.5 187.5M223.5 181.5L220.5 184.5L223.5 187.5M231.5 181.5L228.5 184.5L231.5 187.5M239.5 181.5L236.5 184.5L239.5 187.5M247.5 181.5L244.5 184.5L247.5 187.5M255.5 181.5L252.5 184.5L255.5 187.5M263.5 181.5L260.5 184.5L263.5 187.5M271.5 181.5L268.5 184.5L271.5 187.5M279.5 181.5L276.5 184.5L279.5 187.5M287.5 181.5L284.5 184.5L287.5 187.5M295.5 181.5L292.5 184.5L295.5 187.5M303.5 181.5L300.5 184.5L303.5 187.5M311.5 181.5L308.5 184.5L311.5 187.5M319.5 181.5L316.5 184.5L319.5 187.5M327.5 181.5L324.5 184.5L327.5 187.5M335.5 181.5L332.5 184.5L335.5 187.5M343.5 181.5L340.5 184.5L343.5 187.5M351.5 181.5L348.5 184.5L351.5 187.5M359.5 181.5L356.5 184.5L359.5 187.5M367.5 181.5L364.5 184.5L367.5 187.5M375.5 181.5L372.5 184.5L375.5 187.5M383.5 181.5L380.5 184.5L383.5 187.5M391.5 181.5L388.5 184.5L391.5 187.5M399.5 181.5L396.5 184.5L399.5 187.5M407.5 181.5L404.5 184.5L407.5 187.5M415.5 181.5L412.5 184.5L415.5 187.5M423.5 181.5L420.5 184.5L423.5 187.5M431.5 181.5L428.5 184.5L431.5 187.5M439.5 181.5L436.5 184.5L439.5 187.5M447.5 181.5L444.5 184.5L447.5 187.5M455.5 181.5L452.5 184.5L455.5 187.5M463.5 181.5L460.5 184.5L463.5 187.5M471.5 181.5L468.5 184.5L471.5 187.5M479.5 181.5L476.5 184.5L479.5 187.5M487.5 181.5L484.5 184.5L487.5 187.5M495.5 181.5L492.5 184.5L495.5 187.5M503.5 181.5L500.5 184.5L503.5 187.5M511.5 181.5L508.5 184.5L511.5 187.5M519.5 181.5L516.5 184.5L519.5 187.5M527.5 181.5L524.5 184.5L527.5 187.5M535.5 181.5L532.5 184.5L535.5 187.5M543.5 181.5L540.5 184.5L543.5 187.5M551.5 181.5L548.5 184.5L551.5 187.5M559.5 181.5L556.5 184.5L559.5 187.5M567.5 181.5L564.5 184.5L567.5 187.5M575.5 181.5L572.5 184.5L575.5 187.5M583.5 181.5L580.5 184.5L583.5 187.5M591.5 181.5L588.5 184.5L591.5 187.5M599.5 181.5L596.5 184.5L599.5 187.5M607.5 181.5L604.5 184.5L607.5 187.5M615.5 181.5L612.5 184.5L615.5 187.5M623.5 181.5L620.5 184.5L623.5 187.5M631.5 181.5L628.5 184.5L631.5 187.5M639.5 181.5L636.5 184.5L639.5 187.5M647.5 181.5L644.5 184.5L647.5 187.5M655.5 181.5L652.5 184.5L655.5 187.5M663.5 181.5L660.5 184.5L663.5 187.5M671.5 181.5L668.5 184.5L671.5 187.5M679.5 181.5L676.5 184.5L679.5 187.5M687.5 181.5L684.5 184.5L687.5 187.5M695.5 181.5L692.5 184.5L695.5 187.5M703.5 181.5L700.5 184.5L703.5 187.5M711.5 181.5L708.5 184.5L711.5 187.5M719.5 181.5L716.5 184.5L719.5 187.5M727.5 181.5L724.5 184.5L727.5 187.5M735.5 181.5L732.5 184.5L735.5 187.5M743.5 181.5L740.5 184.5L743.5 187.5M751.5 181.5L748.5 184.5L751.5 187.5M759.5 181.5L756.5 184.5L759.5 187.5M767.5 181.5L764.5 184.5L767.5 187.5M775.5 181.5L772.5 184.5L775.5 187.5M783.5 181.5L780.5 184.5L783.5 187.5M791.5 181.5L788.5 184.5L791.5 187.5M799.5 181.5L796.5 184.5L799.5 187.5M807.5 181.5L804.5 184.5L807.5 187.5M815.5 181.5L812.5 184.5L815.5 187.5M823.5 181.5L820.5 184.5L823.5 187.5M831.5 181.5L828.5 184.5L831.5 187.5M839.5 181.5L836.5 184.5L839.5 187.5M847.5 181.5L844.5 184.5L847.5 187.5M855.5 181.5L852.5 184.5L855.5 187.5M863.5 181.5L860.5 184.5L863.5 187.5M871.5 181.5L868.5 184.5L871.5 187.5M879.5 181.5L876.5 184.5L879.5 187.5M887.5 181.5L884.5 184.5L887.5 187.5M895.5 181.5L892.5 184.5L895.5 187.5M903.5 181.5L900.5 184.5L903.5 187.5M911.5 181.5L908.5 184.5L911.5 187.5M919.5 181.5L916.5 184.5L919.5 187.5M927.5 181.5L924.5 184.5L927.5 187.5M935.5 181.5L932.5 184.5L935.5 187.5M943.5 181.5L940.5 184.5L943.5 187.5" stroke="#0c0c78" stroke-width="1" fill="none"/>
<rect class="c" x="156" y="200" width="793" height="1" fill="#0c0c78"/>
<path d="M159.5 197.5L156.5 200.5L159.5 203.5M167.5 197.5L164.5 200.5L167.5 203.5M175.5 197.5L172.5 200.5L175.5 203.5M183.5 197.5L180.5 200.5L183.5 203.5M191.5 197.5L188.5 200.5L191.5 203.5M199.5 197.5L196.5 200.5L199.5 203.5M207.5 197.5L204.5 200.5L207.5 203.5M215.5 197.5L212.5 200.5L215.5 203.5M223.5 197.5L220.5 200.5L223.5 203.5M231.5 197.5L228.5 200.5L231.5 203.5M239.5 197.5L236.5 200.5L239.5 203.5M247.5 197.5L244.5 200.5L247.5 203.5M255.5 197.5L252.5 200.5L255.5 203.5M263.5 197.5L260.5 200.5L263.5 203.5M271.5 197.5L268.5 200.5L271.5 203.5M279.5 197.5L276.5 200.5L279.5 203.5M287.5 197.5L284.5 200.5L287.5 203.5M295.5 197.5L292.5 200.5L295.5 203.5M303.5 197.5L300.5 200.5L303.5 203.5M311.5 197.5L308.5 200.5L311.5 203.5M319.5 197.5L316.5 200.5L319.5 203.5M327.5 197.5L324.5 200.5L327.5 203.5M335.5 197.5L332.5 200.5L335.5 203.5M343.5 197.5L340.5 200.5L343.5 203.5M351.5 197.5L348.5 200.5L351.5 203.5M359.5 197.5L356.5 200.5L359.5 203.5M367.5 197.5L364.5 200.5L367.5 203.5M375.5 197.5L372.5 200.5L375.5 203.5M383.5 197.5L380.5 200.5L383.5 203.5M391.5 197.5L388.5 200.5L391.5 203.5M399.5 197.5L396.5 200.5L399.5 203.5M407.5 197.5L404.5 200.5L407.5 203.5M415.5 197.5L412.5 200.5L415.5 203.5M423.5 197.5L420.5 200.5L423.5 203.5M431.5 197.5L428.5 200.5L431.5 203.5M439.5 197.5L436.5 200.5L439.5 203.5M447.5 197.5L444.5 200.5L447.5 203.5M455.5 197.5L452.5 200.5L455.5 203.5M463.5 197.5L460.5 200.5L463.5 203.5M471.5 197.5L468.5 200.5L471.5 203.5M479.5 197.5L476.5 200.5L479.5 203.5M487.5 197.5L484.5 200.5L487.5 203.5M495.5 197.5L492.5 200.5L495.5 203.5M503.5 197.5L500.5 200.5L503.5 203.5M511.5 197.5L508.5 200.5L511.5 203.5M519.5 197.5L516.5 200.5L519.5 203.5M527.5 197.5L524.5 200.5L527.5 203.5M535.5 197.5L532.5 200.5L535.5 203.5M543.5 197.5L540.5 200.5L543.5 203.5M551.5 197.5L548.5 200.5L551.5 203.5M559.5 197.5L556.5 200.5L559.5 203.5M567.5 197.5L564.5 200.5L567.5 203.5M575.5 197.5L572.5 200.5L575.5 203.5M583.5 197.5L580.5 200.5L583.5 203.5M591.5 197.5L588.5 200.5L591.5 203.5M599.5 197.5L596.5 200.5L599.5 203.5M607.5 197.5L604.5 200.5L607.5 203.5M615.5 197.5L612.5 200.5L615.5 203.5M623.5 197.5L620.5 200.5L623.5 203.5M631.5 197.5L628.5 200.5L631.5 203.5M639.5 197.5L636.5 200.5L639.5 203.5M647.5 197.5L644.5 200.5L647.5 203.5M655.5 197.5L652.5 200.5L655.5 203.5M663.5 197.5L660.5 200.5L663.5 203.5M671.5 197.5L668.5 200.5L671.5 203.5M679.5 197.5L676.5 200.5L679.5 203.5M687.5 197.5L684.5 200.5L687.5 203.5M695.5 197.5L692.5 200.5L695.5 203.5M703.5 197.5L700.5 200.5L703.5 203.5M711.5 197.5L708.5 200.5L711.5 203.5M719.5 197.5L716.5 200.5L719.5 203.5M727.5 197.5L724.5 200.5L727.5 203.5M735.5 197.5L732.5 200.5L735.5 203.5M743.5 197.5L740.5 200.5L743.5 203.5M751.5 197.5L748.5 200.5L751.5 203.5M759.5 197.5L756.5 200.5L759.5 203.5M767.5 197.5L764.5 200.5L767.5 203.5M775.5 197.5L772.5 200.5L775.5 203.5M783.5 197.5L780.5 200.5L783.5 203.5M791.5 197.5L788.5 200.5L791.5 203.5M799.5 197.5L796.5 200.5L799.5 203.5M807.5 197.5L804.5 200.5L807.5 203.5M815.5 197.5L812.5 200.5L815.5 203.5M823.5 197.5L820.5 200.5L823.5 203.5M831.5 197.5L828.5 200.5L831.5 203.5M839.5 197.5L836.5 200.5L839.5 203.5M847.5 197.5L844.5 200.5L847.5 203.5M855.5 197.5L852.5 200.5L855.5 203.5M863.5 197.5L860.5 200.5L863.5 203.5M871.5 197.5L868.5 200.5L871.5 203.5M879.5 197.5L876.5 200.5L879.5 203.5M887.5 197.5L884.5 200.5L887.5 203.5M895.5 197.5L892.5 200.5L895.5 203.5M903.5 197.5L900.5 200.5L903.5 203.5M911.5 197.5L908.5 200.5L911.5 203.5M919.5 197.5L916.5 200.5L919.5 203.5M927.5 197.5L924.5 200.5L927.5 203.5M935.5 197.5L932.5 200.5L935.5 203.5M943.5 197.5L940.5 200.5L943.5 203.5" stroke="#0c0c78" stroke-width="1" fill="none"/>
<rect class="c" x="156" y="216" width="793" height="1" fill="#0c0c78"/>
<path d="M159.5 213.5L156.5 216.5L159.5 219.5M167.5 213.5L164.5 216.5L167.5 219.5M175.5 213.5L172.5 216.5L175.5 219.5M183.5 213.5L180.5 216.5L183.5 219.5M191.5 213.5L188.5 216.5L191.5 219.5M199.5 213.5L196.5 216.5L199.5 219.5M207.5 213.5L204.5 216.5L207.5 219.5M215.5 213.5L212.5 216.5L215.5 219.5M223.5 213.5L220.5 216.5L223.5 219.5M231.5 213.5L228.5 216.5L231.5 219.5M239.5 213.5L236.5 216.5L239.5 219.5M247.5 213.5L244.5 216.5L247.5 219.5M255.5 213.5L252.5 216.5L255.5 219.5M263.5 213.5L260.5 216.5L263.5 219.5M271.5 213.5L268.5 216.5L271.5 219.5M279.5 213.5L276.5 216.5L279.5 219.5M287.5 213.5L284.5 216.5L287.5 219.5M295.5 213.5L292.5 216.5L295.5 219.5M303.5 213.5L300.5 216.5L303.5 219.5M311.5 213.5L308.5 216.5L311.5 219.5M319.5 213.5L316.5 216.5L319.5 219.5M327.5 213.5L324.5 216.5L327.5 219.5M335.5 213.5L332.5 216.5L335.5 219.5M343.5 213.5L340.5 216.5L343.5 219.5M351.5 213.5L348.5 216.5L351.5 219.5M359.5 213.5L356.5 216.5L359.5 219.5M367.5 213.5L364.5 216.5L367.5 219.5M375.5 213.5L372.5 216.5L375.5 219.5M383.5 213.5L380.5 216.5L383.5 219.5M391.5 213.5L388.5 216.5L391.5 219.5M399.5 213.5L396.5 216.5L399.5 219.5M407.5 213.5L404.5 216.5L407.5 219.5M415.5 213.5L412.5 216.5L415.5 219.5M423.5 213.5L420.5 216.5L423.5 219.5M431.5 213.5L428.5 216.5L431.5 219.5M439.5 213.5L436.5 216.5L439.5 219.5M447.5 213.5L444.5 216.5L447.5 219.5M455.5 213.5L452.5 216.5L455.5 219.5M463.5 213.5L460.5 216.5L463.5 219.5M471.5 213.5L468.5 216.5L471.5 219.5M479.5 213.5L476.5 216.5L479.5 219.5M487.5 213.5L484.5 216.5L487.5 219.5M495.5 213.5L492.5 216.5L495.5 219.5M503.5 213.5L500.5 216.5L503.5 219.5M511.5 213.5L508.5 216.5L511.5 219.5M519.5 213.5L516.5 216.5L519.5 219.5M527.5 213.5L524.5 216.5L527.5 219.5M535.5 213.5L532.5 216.5L535.5 219.5M543.5 213.5L540.5 216.5L543.5 219.5M551.5 213.5L548.5 216.5L551.5 219.5M559.5 213.5L556.5 216.5L559.5 219.5M567.5 213.5L564.5 216.5L567.5 219.5M575.5 213.5L572.5 216.5L575.5 219.5M583.5 213.5L580.5 216.5L583.5 219.5M591.5 213.5L588.5 216.5L591.5 219.5M599.5 213.5L596.5 216.5L599.5 219.5M607.5 213.5L604.5 216.5L607.5 219.5M615.5 213.5L612.5 216.5L615.5 219.5M623.5 213.5L620.5 216.5L623.5 219.5M631.5 213.5L628.5 216.5L631.5 219.5M639.5 213.5L636.5 216.5L639.5 219.5M647.5 213.5L644.5 216.5L647.5 219.5M655.5 213.5L652.5 216.5L655.5 219.5M663.5 213.5L660.5 216.5L663.5 219.5M671.5 213.5L668.5 216.5L671.5 219.5M679.5 213.5L676.5 216.5L679.5 219.5M687.5 213.5L684.5 216.5L687.5 219.5M695.5 213.5L692.5 216.5L695.5 219.5M703.5 213.5L700.5 216.5L703.5 219.5M711.5 213.5L708.5 216.5L711.5 219.5M719.5 213.5L716.5 216.5L719.5 219.5M727.5 213.5L724.5 216.5L727.5 219.5M735.5 213.5L732.5 216.5L735.5 219.5M743.5 213.5L740.5 216.5L743.5 219.5M751.5 213.5L748.5 216.5L751.5 219.5M759.5 213.5L756.5 216.5L759.5 219.5M767.5 213.5L764.5 216.5L767.5 219.5M775.5 213.5L772.5 216.5L775.5 219.5M783.5 213.5L780.5 216.5L783.5 219.5M791.5 213.5L788.5 216.5L791.5 219.5M799.5 213.5L796.5 216.5L799.5 219.5M807.5 213.5L804.5 216.5L807.5 219.5M815.5 213.5L812.5 216.5L815.5 219.5M823.5 213.5L820.5 216.5L823.5 219.5M831.5 213.5L828.5 216.5L831.5 219.5M839.5 213.5L836.5 216.5L839.5 219.5M847.5 213.5L844.5 216.5L847.5 219.5M855.5 213.5L852.5 216.5L855.5 219.5M863.5 213.5L860.5 216.5L863.5 219.5M871.5 213.5L868.5 216.5L871.5 219.5M879.5 213.5L876.5 216.5L879.5 219.5M887.5 213.5L884.5 216.5L887.5 219.5M895.5 213.5L892.5 216.5L895.5 219.5M903.5 213.5L900.5 216.5L903.5 219.5M911.5 213.5L908.5 216.5L911.5 219.5M919.5 213.5L916.5 216.5L919.5 219.5M927.5 213.5L924.5 216.5L927.5 219.5M935.5 213.5L932.5 216.5L935.5 219.5M943.5 213.5L940.5 216.5L943.5 219.5" stroke="#0c0c78" stroke-width="1" fill="none"/>
<rect class="c" x="156" y="232" width="793" height="1" fill="#0c0c78"/>
<path d="M159.5 229.5L156.5 232.5L159.5 235.5M167.5 229.5L164.5 232.5L167.5 235.5M175.5 229.5L172.5 232.5L175.5 235.5M183.5 229.5L180.5 232.5L183.5 235.5M191.5 229.5L188.5 232.5L191.5 235.5M199.5 229.5L196.5 232.5L199.5 235.5M207.5 229.5L204.5 232.5L207.5 235.5M215.5 229.5L212.5 232.5L215.5 235.5M223.5 229.5L220.5 232.5L223.5 235.5M231.5 229.5L228.5 232.5L231.5 235.5M239.5 229.5L236.5 232.5L239.5 235.5M247.5 229.5L244.5 232.5L247.5 235.5M255.5 229.5L252.5 232.5L255.5 235.5M263.5 229.5L260.5 232.5L263.5 235.5M271.5 229.5L268.5 232.5L271.5 235.5M279.5 229.5L276.5 232.5L279.5 235.5M287.5 229.5L284.5 232.5L287.5 235.5M295.5 229.5L292.5 232.5L295.5 235.5M303.5 229.5L300.5 232.5L303.5 235.5M311.5 229.5L308.5 232.5L311.5 235.5M319.5 229.5L316.5 232.5L319.5 235.5M327.5 229.5L324.5 232.5L327.5 235.5M335.5 229.5L332.5 232.5L335.5 235.5M343.5 229.5L340.5 232.5L343.5 235.5M351.5 229.5L348.5 232.5L351.5 235.5M359.5 229.5L356.5 232.5L359.5 235.5M367.5 229.5L364.5 232.5L367.5 235.5M375.5 229.5L372.5 232.5L375.5 235.5M383.5 229.5L380.5 232.5L383.5 235.5M391.5 229.5L388.5 232.5L391.5 235.5M399.5 229.5L396.5 232.5L399.5 235.5M407.5 229.5L404.5 232.5L407.5 235.5M415.5 229.5L412.5 232.5L415.5 235.5M423.5 229.5L420.5 232.5L423.5 235.5M431.5 229.5L428.5 232.5L431.5 235.5M439.5 229.5L436.5 232.5L439.5 235.5M447.5 229.5L444.5 232.5L447.5 235.5M455.5 229.5L452.5 232.5L455.5 235.5M463.5 229.5L460.5 232.5L463.5 235.5M471.5 229.5L468.5 232.5L471.5 235.5M479.5 229.5L476.5 232.5L479.5 235.5M487.5 229.5L484.5 232.5L487.5 235.5M495.5 229.5L492.5 232.5L495.5 235.5M503.5 229.5L500.5 232.5L503.5 235.5M511.5 229.5L508.5 232.5L511.5 235.5M519.5 229.5L516.5 232.5L519.5 235.5M527.5 229.5L524.5 232.5L527.5 235.5M535.5 229.5L532.5 232.5L535.5 235.5M543.5 229.5L540.5 232.5L543.5 235.5M551.5 229.5L548.5 232.5L551.5 235.5M559.5 229.5L556.5 232.5L559.5 235.5M567.5 229.5L564.5 232.5L567.5 235.5M575.5 229.5L572.5 232.5L575.5 235.5M583.5 229.5L580.5 232.5L583.5 235.5M591.5 229.5L588.5 232.5L591.5 235.5M599.5 229.5L596.5 232.5L599.5 235.5M607.5 229.5L604.5 232.5L607.5 235.5M615.5 229.5L612.5 232.5L615.5 235.5M623.5 229.5L620.5 232.5L623.5 235.5M631.5 229.5L628.5 232.5L631.5 235.5M639.5 229.5L636.5 232.5L639.5 235.5M647.5 229.5L644.5 232.5L647.5 235.5M655.5 229.5L652.5 232.5L655.5 235.5M663.5 229.5L660.5 232.5L663.5 235.5M671.5 229.5L668.5 232.5L671.5 235.5M679.5 229.5L676.5 232.5L679.5 235.5M687.5 229.5L684.5 232.5L687.5 235.5M695.5 229.5L692.5 232.5L695.5 235.5M703.5 229.5L700.5 232.5L703.5 235.5M711.5 229.5L708.5 232.5L711.5 235.5M719.5 229.5L716.5 232.5L719.5 235.5M727.5 229.5L724.5 232.5L727.5 235.5M735.5 229.5L732.5 232.5L735.5 235.5M743.5 229.5L740.5 232.5L743.5 235.5M751.5 229.5L748.5 232.5L751.5 235.5M759.5 229.5L756.5 232.5L759.5 235.5M767.5 229.5L764.5 232.5L767.5 235.5M775.5 229.5L772.5 232.5L775.5 235.5M783.5 229.5L780.5 232.5L783.5 235.5M791.5 229.5L788.5 232.5L791.5 235.5M799.5 229.5L796.5 232.5L799.5 235.5M807.5 229.5L804.5 232.5L807.5 235.5M815.5 229.5L812.5 232.5L815.5 235.5M823.5 229.5L820.5 232.5L823.5 235.5M831.5 229.5L828.5 232.5L831.5 235.5M839.5 229.5L836.5 232.5L839.5 235.5M847.5 229.5L844.5 232.5L847.5 235.5M855.5 229.5L852.5 232.5L855.5 235.5M863.5 229.5L860.5 232.5L863.5 235.5M871.5 229.5L868.5 232.5L871.5 235.5M879.5 229.5L876.5 232.5L879.5 235.5M887.5 229.5L884.5 232.5L887.5 235.5M895.5 229.5L892.5 232.5L895.5 235.5M903.5 229.5L900.5 232.5L903.5 235.5M911.5 229.5L908.5 232.5L911.5 235.5M919.5 229.5L916.5 232.5L919.5 235.5M927.5 229.5L924.5 232.5L927.5 235.5M935.5 229.5L932.5 232.5L935.5 235.5M943.5 229.5L940.5 232.5L943.5 235.5" stroke="#0c0c78" stroke-width="1" fill="none"/>
<rect class="c" x="156" y="248" width="793" height="1" fill="#1270ac"/>
<path d="M159.5 245.5L156.5 248.5L159.5 251.5M167.5 245.5L164.5 248.5L167.5 251.5M175.5 245.5L172.5 248.5L175.5 251.5M183.5 245.5L180.5 248.5L183.5 251.5M191.5 245.5L188.5 248.5L191.5 251.5M199.5 245.5L196.5 248.5L199.5 251.5M207.5 245.5L204.5 248.5L207.5 251.5M215.5 245.5L212.5 248.5L215.5 251.5M223.5 245.5L220.5 248.5L223.5 251.5M231.5 245.5L228.5 248.5L231.5 251.5M239.5 245.5L236.5 248.5L239.5 251.5M247.5 245.5L244.5 248.5L247.5 251.5M255.5 245.5L252.5 248.5L255.5 251.5M263.5 245.5L260.5 248.5L263.5 251.5M271.5 245.5L268.5 248.5L271.5 251.5M279.5 245.5L276.5 248.5L279.5 251.5M287.5 245.5L284.5 248.5L287.5 251.5M295.5 245.5L292.5 248.5L295.5 251.5M303.5 245.5L300.5 248.5L303.5 251.5M311.5 245.5L308.5 248.5L311.5 251.5M319.5 245.5L316.5 248.5L319.5 251.5M327.5 245.5L324.5 248.5L327.5 251.5M335.5 245.5L332.5 248.5L335.5 251.5M343.5 245.5L340.5 248.5L343.5 251.5M351.5 245.5L348.5 248.5L351.5 251.5M359.5 245.5L356.5 248.5L359.5 251.5M367.5 245.5L364.5 248.5L367.5 251.5M375.5 245.5L372.5 248.5L375.5 251.5M383.5 245.5L380.5 248.5L383.5 251.5M391.5 245.5L388.5 248.5L391.5 251.5M399.5 245.5L396.5 248.5L399.5 251.5M407.5 245.5L404.5 248.5L407.5 251.5M415.5 245.5L412.5 248.5L415.5 251.5M423.5 245.5L420.5 248.5L423.5 251.5M431.5 245.5L428.5 248.5L431.5 251.5M439.5 245.5L436.5 248.5L439.5 251.5M447.5 245.5L444.5 248.5L447.5 251.5M455.5 245.5L452.5 248.5L455.5 251.5M463.5 245.5L460.5 248.5L463.5 251.5M471.5 245.5L468.5 248.5L471.5 251.5M479.5 245.5L476.5 248.5L479.5 251.5M487.5 245.5L484.5 248.5L487.5 251.5M495.5 245.5L492.5 248.5L495.5 251.5M503.5 245.5L500.5 248.5L503.5 251.5M511.5 245.5L508.5 248.5L511.5 251.5M519.5 245.5L516.5 248.5L519.5 251.5M527.5 245.5L524.5 248.5L527.5 251.5M535.5 245.5L532.5 248.5L535.5 251.5M543.5 245.5L540.5 248.5L543.5 251.5M551.5 245.5L548.5 248.5L551.5 251.5M559.5 245.5L556.5 248.5L559.5 251.5M567.5 245.5L564.5 248.5L567.5 251.5M575.5 245.5L572.5 248.5L575.5 251.5M583.5 245.5L580.5 248.5L583.5 251.5M591.5 245.5L588.5 248.5L591.5 251.5M599.5 245.5L596.5 248.5L599.5 251.5M607.5 245.5L604.5 248.5L607.5 251.5M615.5 245.5L612.5 248.5L615.5 251.5M623.5 245.5L620.5 248.5L623.5 251.5M631.5 245.5L628.5 248.5L631.5 251.5M639.5 245.5L636.5 248.5L639.5 251.5M647.5 245.5L644.5 248.5L647.5 251.5M655.5 245.5L652.5 248.5L655.5 251.5M663.5 245.5L660.5 248.5L663.5 251.5M671.5 245.5L668.5 248.5L671.5 251.5M679.5 245.5L676.5 248.5L679.5 251.5M687.5 245.5L684.5 248.5L687.5 251.5M695.5 245.5L692.5 248.5L695.5 251.5M703.5 245.5L700.5 248.5L703.5 251.5M711.5 245.5L708.5 248.5L711.5 251.5M719.5 245.5L716.5 248.5L719.5 251.5M727.5 245.5L724.5 248.5L727.5 251.5M735.5 245.5L732.5 248.5L735.5 251.5M743.5 245.5L740.5 248.5L743.5 251.5M751.5 245.5L748.5 248.5L751.5 251.5M759.5 245.5L756.5 248.5L759.5 251.5M767.5 245.5L764.5 248.5L767.5 251.5M775.5 245.5L772.5 248.5L775.5 251.5M783.5 245.5L780.5 248.5L783.5 251.5M791.5 245.5L788.5 248.5L791.5 251.5M799.5 245.5L796.5 248.5L799.5 251.5M807.5 245.5L804.5 248.5L807.5 251.5M815.5 245.5L812.5 248.5L815.5 251.5M823.5 245.5L820.5 248.5L823.5 251.5M831.5 245.5L828.5 248.5L831.5 251.5M839.5 245.5L836.5 248.5L839.5 251.5M847.5 245.5L844.5 248.5L847.5 251.5M855.5 245.5L852.5 248.5L855.5 251.5M863.5 245.5L860.5 248.5L863.5 251.5M871.5 245.5L868.5 248.5L871.5 251.5M879.5 245.5L876.5 248.5L879.5 251.5M887.5 245.5L884.5 248.5L887.5 251.5M895.5 245.5L892.5 248.5L895.5 251.5M903.5 245.5L900.5 248.5L903.5 251.5M911.5 245.5L908.5 248.5L911.5 251.5M919.5 245.5L916.5 248.5L919.5 251.5M927.5 245.5L924.5 248.5L927.5 251.5M935.5 245.5L932.5 248.5L935.5 251.5M943.5 245.5L940.5 248.5L943.5 251.5" stroke="#1270ac" stroke-width="1" fill="none"/>
<rect class="c" x="157" y="279" width="792" height="1" fill="#0c0c78"/>
<rect class="c" x="156" y="350" width="793" height="15" fill="#bebebe"/>
<g class="c" fill="#000">
<rect x="403" y="381" width="1" height="15"/>
<rect x="900" y="381" width="1" height="15"/>
<rect x="917" y="381" width="1" height="15"/>
<rect x="946" y="381" width="1" height="15"/>
<rect x="511" y="381" width="2" height="15"/><rect x="509" y="384" width="2" height="9"/>
<rect x="581" y="381" width="11" height="15"/><rect x="579" y="384" width="2" height="9"/>
</g>
<g class="c">
<rect x="156" y="413" width="378" height="80" fill="#f3f3f3"/>
<rect x="157" y="414" width="376" height="78" fill="#ffffff"/>
<rect x="156" y="475" width="5" height="17" fill="#ffa54f"/>
<rect x="163" y="471" width="5" height="21" fill="#ee9a00"/>
<rect x="170" y="464" width="5" height="28" fill="#8fbc8f"/>
<rect x="177" y="467" width="5" height="25" fill="#8b1c62"/>
<rect x="184" y="469" width="5" height="23" fill="#ee6a50"/>
<rect x="191" y="477" width="5" height="15" fill="#ff0000"/>
<rect x="198" y="458" width="5" height="34" fill="#cdb79e"/>
<rect x="205" y="437" width="5" height="55" fill="#eeee00"/>
<rect x="212" y="436" width="5" height="56" fill="#eeee00"/>
<rect x="219" y="413" width="5" height="79" fill="#eeee00"/>
<rect x="226" y="439" width="5" height="53" fill="#eeee00"/>
<rect x="233" y="437" width="5" height="55" fill="#eeee00"/>
<rect x="240" y="435" width="5" height="57" fill="#eeee00"/>
<rect x="247" y="436" width="5" height="56" fill="#eeee00"/>
<rect x="254" y="436" width="5" height="56" fill="#eeee00"/>
<rect x="261" y="442" width="5" height="50" fill="#eeee00"/>
<rect x="268" y="414" width="5" height="78" fill="#eeee00"/>
<rect x="275" y="415" width="5" height="77" fill="#eeee00"/>
<rect x="282" y="427" width="5" height="65" fill="#eeee00"/>
<rect x="289" y="437" width="5" height="55" fill="#eeee00"/>
<rect x="296" y="466" width="5" height="26" fill="#00cdcd"/>
<rect x="303" y="448" width="5" height="44" fill="#ee82ee"/>
<rect x="310" y="483" width="5" height="9" fill="#9ac0cd"/>
<rect x="317" y="462" width="5" height="30" fill="#eed5d2"/>
<rect x="324" y="459" width="5" height="33" fill="#eed5d2"/>
<rect x="331" y="460" width="5" height="32" fill="#cdb79e"/>
<rect x="338" y="464" width="5" height="28" fill="#eec591"/>
<rect x="345" y="455" width="5" height="37" fill="#8b7355"/>
<rect x="352" y="468" width="5" height="24" fill="#8b7355"/>
<rect x="359" y="454" width="5" height="38" fill="#cdaa7d"/>
<rect x="366" y="455" width="5" height="37" fill="#eed5d2"/>
<rect x="373" y="452" width="5" height="40" fill="#b452cd"/>
<rect x="380" y="456" width="5" height="36" fill="#7a378b"/>
<rect x="387" y="464" width="5" height="28" fill="#cdb79e"/>
<rect x="394" y="460" width="5" height="32" fill="#cdb79e"/>
<rect x="401" y="476" width="5" height="16" fill="#cdb79e"/>
<rect x="408" y="464" width="5" height="28" fill="#9acd32"/>
<rect x="415" y="456" width="5" height="36" fill="#cdb79e"/>
<rect x="422" y="479" width="5" height="13" fill="#7a67ee"/>
<rect x="429" y="461" width="5" height="31" fill="#ffd700"/>
<rect x="436" y="450" width="5" height="42" fill="#ffb6c1"/>
<rect x="443" y="471" width="5" height="21" fill="#cd9b1d"/>
<rect x="450" y="447" width="5" height="45" fill="#b4eeb4"/>
<rect x="457" y="457" width="5" height="35" fill="#d9d9d9"/>
<rect x="464" y="472" width="5" height="20" fill="#3a5fcd"/>
<rect x="471" y="471" width="5" height="21" fill="#1e90ff"/>
<rect x="478" y="454" width="5" height="38" fill="#cdb79e"/>
<rect x="485" y="447" width="5" height="45" fill="#cdb79e"/>
<rect x="492" y="464" width="5" height="28" fill="#ffd39b"/>
<rect x="499" y="453" width="5" height="39" fill="#a6a6a6"/>
<rect x="506" y="459" width="5" height="33" fill="#008b45"/>
<rect x="513" y="454" width="5" height="38" fill="#eed5d2"/>
<rect x="520" y="469" width="5" height="23" fill="#eed5d2"/>
<rect x="527" y="469" width="5" height="23" fill="#ff00ff"/>
<rect x="156" y="493" width="793" height="2" fill="#00006e"/>
</g>
<g class="c">
<rect x="156" y="541" width="22" height="1" fill="#5a1428"/>
<rect x="156" y="540" width="22" height="1" fill="#ff6e6e"/>
<rect x="178" y="541" width="141" height="1" fill="#6a3a96"/>
<rect x="319" y="541" width="85" height="1" fill="#4a1030"/>
<rect x="347" y="540" width="29" height="1" fill="#ff8080"/>
<rect x="376" y="539" width="28" height="1" fill="#ff8080"/>
<rect x="376" y="540" width="28" height="1" fill="#a8586a"/>
<rect x="404" y="538" width="29" height="2" fill="#ff8080"/>
<rect x="404" y="540" width="29" height="1" fill="#3a1038"/>
<rect x="404" y="541" width="29" height="1" fill="#1e0628"/>
<rect x="433" y="538" width="28" height="2" fill="#ff8080"/>
<rect x="433" y="540" width="28" height="1" fill="#7e6a98"/>
<rect x="433" y="541" width="28" height="1" fill="#1e0628"/>
<rect x="461" y="540" width="29" height="1" fill="#8a5a48"/>
<rect x="461" y="541" width="29" height="1" fill="#1e0628"/>
<rect x="490" y="538" width="28" height="1" fill="#ff8080"/>
<rect x="490" y="539" width="28" height="1" fill="#9a7090"/>
<rect x="490" y="540" width="28" height="1" fill="#4a2040"/>
<rect x="490" y="541" width="28" height="1" fill="#1e0628"/>
<rect x="518" y="536" width="85" height="3" fill="#ff8080"/>
<rect x="518" y="539" width="85" height="1" fill="#9a7090"/>
<rect x="518" y="540" width="85" height="1" fill="#4a2040"/>
<rect x="518" y="541" width="85" height="1" fill="#1e0628"/>
<rect x="603" y="535" width="28" height="5" fill="#ff8080"/>
<rect x="603" y="540" width="28" height="1" fill="#8a2838"/>
<rect x="603" y="541" width="28" height="1" fill="#1e0628"/>
<rect x="631" y="534" width="29" height="6" fill="#ff8080"/>
<rect x="631" y="540" width="29" height="1" fill="#f06a3c"/>
<rect x="631" y="541" width="29" height="1" fill="#2a0820"/>
<rect x="660" y="532" width="28" height="8" fill="#ff8080"/>
<rect x="660" y="540" width="28" height="1" fill="#f06a3c"/>
<rect x="660" y="541" width="28" height="1" fill="#2a0820"/>
<rect x="688" y="532" width="28" height="8" fill="#ff8080"/>
<rect x="688" y="540" width="28" height="1" fill="#2a1030"/>
<rect x="688" y="541" width="28" height="1" fill="#100020"/>
<rect x="716" y="532" width="29" height="8" fill="#ff8080"/>
<rect x="716" y="540" width="29" height="1" fill="#c04858"/>
<rect x="716" y="541" width="29" height="1" fill="#2a0820"/>
<rect x="745" y="532" width="57" height="7" fill="#ff8080"/>
<rect x="745" y="539" width="57" height="1" fill="#ff6a48"/>
<rect x="745" y="540" width="57" height="1" fill="#a02030"/>
<rect x="745" y="541" width="57" height="1" fill="#14002a"/>
<rect x="802" y="533" width="28" height="6" fill="#ff8080"/>
<rect x="802" y="539" width="28" height="1" fill="#ff6a48"/>
<rect x="802" y="540" width="28" height="1" fill="#a02030"/>
<rect x="802" y="541" width="28" height="1" fill="#14002a"/>
<rect x="830" y="534" width="28" height="6" fill="#ff8080"/>
<rect x="830" y="540" width="28" height="1" fill="#f06a3c"/>
<rect x="830" y="541" width="28" height="1" fill="#2a0828"/>
<rect x="858" y="535" width="29" height="5" fill="#ff8080"/>
<rect x="858" y="540" width="29" height="1" fill="#f06a3c"/>
<rect x="858" y="541" width="29" height="1" fill="#2a0828"/>
<rect x="887" y="536" width="28" height="4" fill="#ff8080"/>
<rect x="887" y="540" width="28" height="1" fill="#f06a3c"/>
<rect x="887" y="541" width="28" height="1" fill="#2a0828"/>
<rect x="915" y="537" width="28" height="3" fill="#ff8080"/>
<rect x="915" y="540" width="28" height="1" fill="#f06a3c"/>
<rect x="915" y="541" width="28" height="1" fill="#2a0828"/>
<rect x="943" y="538" width="6" height="2" fill="#ff8080"/>
<rect x="943" y="540" width="6" height="1" fill="#f06a3c"/>
<rect x="943" y="541" width="6" height="1" fill="#5a1010"/>
</g>
<path class="c" d="M157 583h26V584h-26zM183 582h1V584h-1zM188 583h1V584h-1zM195 583h2V584h-2zM203 583h17V584h-17zM224 581h3V584h-3zM235 583h1V584h-1zM236 581h1V584h-1zM240 581h1V584h-1zM243 582h2V584h-2zM245 583h7V584h-7zM252 581h3V584h-3zM255 582h2V584h-2zM257 581h1V584h-1zM262 583h8V584h-8zM275 580h1V584h-1zM282 583h10V584h-10zM294 583h3V584h-3zM302 580h1V584h-1zM306 581h2V584h-2zM313 582h1V584h-1zM317 583h1V584h-1zM318 582h1V584h-1zM319 583h1V584h-1zM322 583h1V584h-1zM325 580h2V584h-2zM327 581h2V584h-2zM329 582h3V584h-3zM345 583h3V584h-3zM348 581h1V584h-1zM349 582h2V584h-2zM353 582h3V584h-3zM359 582h1V584h-1zM367 582h2V584h-2zM371 582h3V584h-3zM374 581h2V584h-2zM382 582h1V584h-1zM383 580h2V584h-2zM385 581h1V584h-1zM387 581h2V584h-2zM394 582h1V584h-1zM397 581h1V584h-1zM398 582h1V584h-1zM401 579h1V584h-1zM402 581h2V584h-2zM408 582h1V584h-1zM409 578h1V584h-1zM413 581h1V584h-1zM424 582h1V584h-1zM425 577h1V584h-1zM435 582h2V584h-2zM449 581h1V584h-1zM454 582h2V584h-2zM466 581h1V584h-1zM477 576h1V584h-1zM504 582h1V584h-1zM505 578h1V584h-1zM506 580h1V584h-1zM507 581h1V584h-1zM511 582h2V584h-2zM514 582h1V584h-1zM515 579h1V584h-1zM516 582h3V584h-3zM523 583h1V584h-1zM524 582h1V584h-1zM528 581h1V584h-1zM529 579h1V584h-1zM530 581h1V584h-1zM533 582h1V584h-1zM537 583h2V584h-2zM542 582h1V584h-1zM555 582h1V584h-1zM567 581h1V584h-1zM568 580h2V584h-2zM571 581h1V584h-1zM572 579h1V584h-1zM575 579h1V584h-1zM576 578h1V584h-1zM577 581h1V584h-1zM578 577h1V584h-1zM579 581h1V584h-1zM583 581h1V584h-1zM584 583h2V584h-2zM586 581h1V584h-1zM593 582h1V584h-1zM596 580h1V584h-1zM597 577h1V584h-1zM598 580h1V584h-1zM599 582h3V584h-3zM609 582h3V584h-3zM613 582h1V584h-1zM623 582h1V584h-1zM628 582h1V584h-1zM641 581h1V584h-1zM647 578h2V584h-2zM652 579h1V584h-1zM653 572h1V584h-1zM654 580h1V584h-1zM655 581h2V584h-2zM657 578h1V584h-1zM660 582h1V584h-1zM661 583h1V584h-1zM668 581h1V584h-1zM669 582h1V584h-1zM678 581h1V584h-1zM679 583h1V584h-1zM682 582h1V584h-1zM694 583h1V584h-1zM695 581h1V584h-1zM696 583h2V584h-2zM707 581h1V584h-1zM710 581h1V584h-1zM711 580h2V584h-2zM713 574h1V584h-1zM714 572h1V584h-1zM715 575h1V584h-1zM716 580h1V584h-1zM717 581h1V584h-1zM718 575h1V584h-1zM719 572h1V584h-1zM720 579h1V584h-1zM722 582h2V584h-2zM724 577h2V584h-2zM728 580h1V584h-1zM729 577h1V584h-1zM733 582h1V584h-1zM737 577h1V584h-1zM738 573h1V584h-1zM739 582h1V584h-1zM749 582h1V584h-1zM750 574h1V584h-1zM751 575h1V584h-1zM755 581h1V584h-1zM756 582h1V584h-1zM757 581h1V584h-1zM760 581h2V584h-2zM762 579h1V584h-1zM763 578h1V584h-1zM764 573h1V584h-1zM765 578h1V584h-1zM766 580h1V584h-1zM767 576h1V584h-1zM768 579h1V584h-1zM774 582h2V584h-2zM776 581h1V584h-1zM777 575h1V584h-1zM778 571h1V584h-1zM779 574h1V584h-1zM780 577h1V584h-1zM781 578h1V584h-1zM782 579h1V584h-1zM783 581h1V584h-1zM785 581h2V584h-2zM787 572h1V584h-1zM788 570h2V584h-2zM790 575h1V584h-1zM791 579h1V584h-1zM792 581h1V584h-1zM795 578h2V584h-2zM800 581h1V584h-1zM801 578h1V584h-1zM802 581h1V584h-1zM803 578h1V584h-1zM804 576h1V584h-1zM805 578h1V584h-1zM809 578h1V584h-1zM810 582h1V584h-1zM815 582h2V584h-2zM819 582h2V584h-2zM825 579h1V584h-1zM827 579h2V584h-2zM833 580h1V584h-1zM834 578h1V584h-1zM837 582h2V584h-2zM844 580h1V584h-1zM845 577h1V584h-1zM859 582h2V584h-2zM861 581h1V584h-1zM862 579h1V584h-1zM878 581h1V584h-1zM881 582h1V584h-1zM898 582h1V584h-1zM899 581h1V584h-1zM900 582h2V584h-2zM903 582h1V584h-1zM904 580h2V584h-2zM906 573h2V584h-2zM914 581h1V584h-1zM915 579h1V584h-1zM918 580h1V584h-1zM919 578h1V584h-1zM920 582h1V584h-1zM922 582h1V584h-1zM923 581h1V584h-1zM928 581h1V584h-1zM929 579h2V584h-2zM931 581h1V584h-1zM932 582h1V584h-1zM933 581h2V584h-2zM935 582h1V584h-1zM942 581h1V584h-1zM943 582h3V584h-3z" fill="#3c3c8c"/>
<path class="c" d="M156 584h1V586h-1zM184 584h4V585h-4zM190 584h1V591h-1zM191 584h3V590h-3zM194 584h1V587h-1zM197 584h2V586h-2zM199 584h2V585h-2zM201 584h2V588h-2zM220 584h2V585h-2zM222 584h2V587h-2zM227 584h2V586h-2zM229 584h1V590h-1zM230 584h1V593h-1zM231 584h2V590h-2zM233 584h1V588h-1zM234 584h1V586h-1zM238 584h1V589h-1zM241 584h2V586h-2zM258 584h1V586h-1zM259 584h2V591h-2zM271 584h1V586h-1zM272 584h3V588h-3zM276 584h2V586h-2zM278 584h2V594h-2zM280 584h1V590h-1zM281 584h1V585h-1zM292 584h2V589h-2zM297 584h4V585h-4zM303 584h1V586h-1zM304 584h1V588h-1zM308 584h5V585h-5zM314 584h3V585h-3zM320 584h2V588h-2zM324 584h1V586h-1zM332 584h2V586h-2zM334 584h1V597h-1zM335 584h2V593h-2zM337 584h2V591h-2zM339 584h2V590h-2zM341 584h4V586h-4zM351 584h1V589h-1zM357 584h1V590h-1zM358 584h1V591h-1zM360 584h2V587h-2zM362 584h3V586h-3zM365 584h2V591h-2zM369 584h2V585h-2zM376 584h1V587h-1zM377 584h3V586h-3zM380 584h2V588h-2zM386 584h1V585h-1zM389 584h1V586h-1zM390 584h2V590h-2zM392 584h1V587h-1zM393 584h1V585h-1zM395 584h2V587h-2zM399 584h1V586h-1zM400 584h1V589h-1zM404 584h2V587h-2zM406 584h2V597h-2zM410 584h1V585h-1zM411 584h1V588h-1zM412 584h1V585h-1zM414 584h1V586h-1zM415 584h1V589h-1zM416 584h1V591h-1zM417 584h2V587h-2zM419 584h2V592h-2zM421 584h1V587h-1zM422 584h2V585h-2zM426 584h2V593h-2zM428 584h1V590h-1zM429 584h3V587h-3zM432 584h1V589h-1zM433 584h2V586h-2zM437 584h2V585h-2zM439 584h1V587h-1zM440 584h5V585h-5zM445 584h2V587h-2zM447 584h2V585h-2zM451 584h1V585h-1zM452 584h1V586h-1zM453 584h1V585h-1zM456 584h4V585h-4zM460 584h1V586h-1zM461 584h2V585h-2zM463 584h1V589h-1zM464 584h1V591h-1zM465 584h1V585h-1zM467 584h1V585h-1zM468 584h1V590h-1zM469 584h2V585h-2zM471 584h1V587h-1zM472 584h3V585h-3zM475 584h1V590h-1zM476 584h1V595h-1zM478 584h1V587h-1zM479 584h1V589h-1zM480 584h1V588h-1zM481 584h1V587h-1zM482 584h2V586h-2zM484 584h1V592h-1zM485 584h1V601h-1zM486 584h1V597h-1zM487 584h2V590h-2zM489 584h1V594h-1zM490 584h1V588h-1zM491 584h1V586h-1zM492 584h2V590h-2zM494 584h1V587h-1zM495 584h3V588h-3zM498 584h2V587h-2zM500 584h1V592h-1zM501 584h1V595h-1zM502 584h1V589h-1zM503 584h1V586h-1zM508 584h1V588h-1zM509 584h1V592h-1zM513 584h1V585h-1zM519 584h1V594h-1zM520 584h1V600h-1zM521 584h1V596h-1zM522 584h1V586h-1zM525 584h1V593h-1zM526 584h1V595h-1zM527 584h1V587h-1zM531 584h1V586h-1zM532 584h1V585h-1zM534 584h1V585h-1zM535 584h1V588h-1zM536 584h1V585h-1zM539 584h2V591h-2zM541 584h1V585h-1zM544 584h4V585h-4zM548 584h1V587h-1zM549 584h1V590h-1zM550 584h1V587h-1zM551 584h2V585h-2zM553 584h1V589h-1zM554 584h1V585h-1zM556 584h1V587h-1zM557 584h2V591h-2zM559 584h1V588h-1zM560 584h2V586h-2zM562 584h2V587h-2zM564 584h2V585h-2zM570 584h1V586h-1zM573 584h2V586h-2zM580 584h1V586h-1zM581 584h1V592h-1zM582 584h1V590h-1zM587 584h1V598h-1zM588 584h1V590h-1zM590 584h1V586h-1zM591 584h1V587h-1zM592 584h1V585h-1zM594 584h2V586h-2zM602 584h2V586h-2zM604 584h1V587h-1zM605 584h1V589h-1zM606 584h1V593h-1zM607 584h1V590h-1zM608 584h1V586h-1zM612 584h1V585h-1zM614 584h1V586h-1zM615 584h2V588h-2zM617 584h2V586h-2zM619 584h2V590h-2zM621 584h1V587h-1zM622 584h1V585h-1zM624 584h4V585h-4zM629 584h1V590h-1zM630 584h1V594h-1zM631 584h1V592h-1zM632 584h3V585h-3zM635 584h1V587h-1zM636 584h1V589h-1zM637 584h1V587h-1zM638 584h3V585h-3zM642 584h1V585h-1zM643 584h1V587h-1zM644 584h2V585h-2zM649 584h3V585h-3zM658 584h1V588h-1zM659 584h1V591h-1zM662 584h1V588h-1zM663 584h2V586h-2zM665 584h1V596h-1zM666 584h1V599h-1zM670 584h1V586h-1zM671 584h2V592h-2zM673 584h1V588h-1zM674 584h1V590h-1zM675 584h1V588h-1zM676 584h1V593h-1zM680 584h1V588h-1zM683 584h2V585h-2zM685 584h1V591h-1zM686 584h1V592h-1zM687 584h1V588h-1zM688 584h1V591h-1zM689 584h1V588h-1zM690 584h2V586h-2zM692 584h1V589h-1zM693 584h1V591h-1zM698 584h1V590h-1zM699 584h1V595h-1zM700 584h1V592h-1zM701 584h1V589h-1zM702 584h2V588h-2zM704 584h1V587h-1zM705 584h1V593h-1zM706 584h1V588h-1zM709 584h1V586h-1zM721 584h1V585h-1zM726 584h2V590h-2zM730 584h3V585h-3zM734 584h1V585h-1zM735 584h1V588h-1zM736 584h1V585h-1zM740 584h1V587h-1zM741 584h1V589h-1zM742 584h1V587h-1zM743 584h1V586h-1zM744 584h1V588h-1zM745 584h2V590h-2zM747 584h1V593h-1zM748 584h1V590h-1zM752 584h1V585h-1zM753 584h1V588h-1zM754 584h1V586h-1zM758 584h2V585h-2zM769 584h1V585h-1zM770 584h2V589h-2zM772 584h2V585h-2zM784 584h1V585h-1zM793 584h2V585h-2zM797 584h3V585h-3zM806 584h1V585h-1zM807 584h1V589h-1zM808 584h1V585h-1zM811 584h2V586h-2zM813 584h1V587h-1zM814 584h1V590h-1zM817 584h2V589h-2zM821 584h1V592h-1zM822 584h2V600h-2zM824 584h1V589h-1zM826 584h1V585h-1zM829 584h4V585h-4zM835 584h2V585h-2zM839 584h5V585h-5zM846 584h1V586h-1zM847 584h1V589h-1zM848 584h1V604h-1zM849 584h1V597h-1zM850 584h1V588h-1zM851 584h5V585h-5zM856 584h1V586h-1zM857 584h2V585h-2zM863 584h1V594h-1zM864 584h1V606h-1zM865 584h1V590h-1zM866 584h2V592h-2zM868 584h1V586h-1zM869 584h1V585h-1zM870 584h1V587h-1zM871 584h2V585h-2zM873 584h1V586h-1zM874 584h2V585h-2zM876 584h1V588h-1zM877 584h1V586h-1zM879 584h1V585h-1zM882 584h1V586h-1zM883 584h2V587h-2zM885 584h2V590h-2zM887 584h1V588h-1zM888 584h1V593h-1zM889 584h1V596h-1zM890 584h2V586h-2zM892 584h1V590h-1zM893 584h1V592h-1zM894 584h2V589h-2zM896 584h1V587h-1zM897 584h1V586h-1zM902 584h1V585h-1zM908 584h1V586h-1zM909 584h1V597h-1zM910 584h1V595h-1zM911 584h1V588h-1zM912 584h2V585h-2zM916 584h2V585h-2zM921 584h1V585h-1zM924 584h2V585h-2zM926 584h1V587h-1zM927 584h1V585h-1zM936 584h2V585h-2zM938 584h1V589h-1zM939 584h1V591h-1zM940 584h2V585h-2zM946 584h3V585h-3z" fill="#8c3c3c"/>
<g class="c">
<rect x="156" y="628" width="235" height="1" fill="#606060"/>
<rect x="156" y="633" width="235" height="1" fill="#606060"/>
<rect x="533" y="630" width="10" height="1" fill="#606060"/>
<rect x="391" y="624" width="22" height="14" fill="#000000"/>
<rect x="413" y="624" width="1" height="14" fill="#8c8c8c"/>
<rect x="414" y="624" width="48" height="14" fill="#000000"/>
<rect x="462" y="624" width="1" height="14" fill="#8c8c8c"/>
<rect x="463" y="624" width="10" height="14" fill="#000000"/>
<rect x="473" y="624" width="1" height="14" fill="#505050"/>
<rect x="474" y="624" width="11" height="14" fill="#000000"/>
<rect x="485" y="624" width="1" height="14" fill="#8c8c8c"/>
<rect x="486" y="624" width="4" height="14" fill="#000000"/>
<rect x="490" y="624" width="1" height="14" fill="#dcdcdc"/>
<rect x="491" y="624" width="5" height="14" fill="#000000"/>
<rect x="496" y="624" width="1" height="14" fill="#8c8c8c"/>
<rect x="497" y="624" width="5" height="14" fill="#000000"/>
<rect x="502" y="624" width="1" height="14" fill="#505050"/>
<rect x="503" y="624" width="6" height="14" fill="#000000"/>
<rect x="509" y="624" width="3" height="14" fill="#8c8c8c"/>
<rect x="512" y="624" width="18" height="14" fill="#000000"/>
<rect x="530" y="624" width="2" height="14" fill="#8c8c8c"/>
<rect x="543" y="624" width="2" height="14" fill="#8c8c8c"/>
<rect x="545" y="624" width="1" height="14" fill="#dcdcdc"/>
<rect x="546" y="624" width="12" height="14" fill="#8c8c8c"/>
<rect x="558" y="624" width="8" height="14" fill="#000000"/>
<rect x="566" y="624" width="2" height="14" fill="#8c8c8c"/>
<rect x="568" y="624" width="13" height="14" fill="#000000"/>
<rect x="581" y="624" width="2" height="14" fill="#8c8c8c"/>
<rect x="583" y="624" width="2" height="14" fill="#000000"/>
<rect x="585" y="624" width="2" height="14" fill="#8c8c8c"/>
<rect x="587" y="624" width="20" height="14" fill="#000000"/>
<rect x="607" y="624" width="1" height="14" fill="#8c8c8c"/>
<rect x="608" y="624" width="21" height="14" fill="#000000"/>
<rect x="629" y="624" width="1" height="14" fill="#dcdcdc"/>
<rect x="630" y="624" width="45" height="14" fill="#000000"/>
<rect x="675" y="624" width="1" height="14" fill="#dcdcdc"/>
<rect x="676" y="624" width="11" height="14" fill="#000000"/>
<rect x="687" y="624" width="1" height="14" fill="#dcdcdc"/>
<rect x="688" y="624" width="17" height="14" fill="#000000"/>
<rect x="705" y="624" width="1" height="14" fill="#8c8c8c"/>
<rect x="706" y="624" width="24" height="14" fill="#000000"/>
<rect x="730" y="624" width="1" height="14" fill="#dcdcdc"/>
<rect x="731" y="624" width="9" height="14" fill="#000000"/>
<rect x="740" y="624" width="2" height="14" fill="#8c8c8c"/>
<rect x="742" y="624" width="52" height="14" fill="#000000"/>
<rect x="794" y="624" width="1" height="14" fill="#dcdcdc"/>
<rect x="795" y="624" width="21" height="14" fill="#000000"/>
<rect x="816" y="624" width="2" height="14" fill="#8c8c8c"/>
<rect x="818" y="624" width="1" height="14" fill="#000000"/>
<rect x="819" y="624" width="1" height="14" fill="#dcdcdc"/>
<rect x="820" y="624" width="1" height="14" fill="#000000"/>
<rect x="821" y="624" width="2" height="14" fill="#dcdcdc"/>
<rect x="823" y="624" width="24" height="14" fill="#000000"/>
<rect x="847" y="624" width="1" height="14" fill="#8c8c8c"/>
<rect x="848" y="624" width="18" height="14" fill="#000000"/>
<rect x="866" y="624" width="1" height="14" fill="#dcdcdc"/>
<rect x="867" y="624" width="4" height="14" fill="#000000"/>
<rect x="872" y="624" width="8" height="14" fill="#8c8c8c"/>
<rect x="881" y="624" width="4" height="14" fill="#8c8c8c"/>
<rect x="885" y="624" width="32" height="14" fill="#000000"/>
<rect x="917" y="624" width="1" height="14" fill="#8c8c8c"/>
<rect x="918" y="624" width="7" height="14" fill="#000000"/>
<rect x="925" y="624" width="1" height="14" fill="#8c8c8c"/>
<rect x="926" y="624" width="13" height="14" fill="#000000"/>
<rect x="939" y="624" width="1" height="14" fill="#505050"/>
<rect x="940" y="624" width="2" height="14" fill="#8c8c8c"/>
<rect x="942" y="624" width="1" height="14" fill="#000000"/>
<rect x="943" y="624" width="1" height="14" fill="#8c8c8c"/>
<rect x="944" y="624" width="2" height="14" fill="#000000"/>
<rect x="946" y="624" width="1" height="14" fill="#8c8c8c"/>
<rect x="947" y="624" width="2" height="14" fill="#000000"/>
<rect x="156" y="660" width="7" height="1" fill="#606060"/>
<rect x="370" y="658" width="105" height="1" fill="#606060"/>
<rect x="370" y="663" width="105" height="1" fill="#606060"/>
<rect x="533" y="658" width="76" height="1" fill="#606060"/>
<rect x="533" y="663" width="76" height="1" fill="#606060"/>
<rect x="939" y="658" width="10" height="1" fill="#606060"/>
<rect x="939" y="663" width="10" height="1" fill="#606060"/>
<rect x="163" y="654" width="19" height="14" fill="#8c8c8c"/>
<rect x="182" y="654" width="2" height="14" fill="#000000"/>
<rect x="184" y="654" width="1" height="14" fill="#dcdcdc"/>
<rect x="185" y="654" width="4" height="14" fill="#000000"/>
<rect x="189" y="654" width="2" height="14" fill="#8c8c8c"/>
<rect x="191" y="654" width="1" height="14" fill="#000000"/>
<rect x="192" y="654" width="1" height="14" fill="#8c8c8c"/>
<rect x="193" y="654" width="5" height="14" fill="#000000"/>
<rect x="198" y="654" width="1" height="14" fill="#8c8c8c"/>
<rect x="199" y="654" width="1" height="14" fill="#000000"/>
<rect x="201" y="654" width="20" height="14" fill="#8c8c8c"/>
<rect x="221" y="654" width="1" height="14" fill="#dcdcdc"/>
<rect x="223" y="654" width="1" height="14" fill="#8c8c8c"/>
<rect x="224" y="654" width="4" height="14" fill="#000000"/>
<rect x="230" y="654" width="1" height="14" fill="#000000"/>
<rect x="232" y="654" width="2" height="14" fill="#dcdcdc"/>
<rect x="236" y="654" width="2" height="14" fill="#000000"/>
<rect x="241" y="654" width="1" height="14" fill="#000000"/>
<rect x="242" y="654" width="1" height="14" fill="#dcdcdc"/>
<rect x="243" y="654" width="2" height="14" fill="#000000"/>
<rect x="247" y="654" width="4" height="14" fill="#8c8c8c"/>
<rect x="251" y="654" width="4" height="14" fill="#000000"/>
<rect x="255" y="654" width="1" height="14" fill="#8c8c8c"/>
<rect x="256" y="654" width="1" height="14" fill="#000000"/>
<rect x="257" y="654" width="1" height="14" fill="#8c8c8c"/>
<rect x="258" y="654" width="1" height="14" fill="#dcdcdc"/>
<rect x="261" y="654" width="9" height="14" fill="#8c8c8c"/>
<rect x="270" y="654" width="1" height="14" fill="#dcdcdc"/>
<rect x="271" y="654" width="2" height="14" fill="#8c8c8c"/>
<rect x="273" y="654" width="1" height="14" fill="#000000"/>
<rect x="274" y="654" width="1" height="14" fill="#8c8c8c"/>
<rect x="275" y="654" width="1" height="14" fill="#000000"/>
<rect x="276" y="654" width="1" height="14" fill="#8c8c8c"/>
<rect x="277" y="654" width="3" height="14" fill="#000000"/>
<rect x="280" y="654" width="2" height="14" fill="#8c8c8c"/>
<rect x="283" y="654" width="15" height="14" fill="#8c8c8c"/>
<rect x="298" y="654" width="1" height="14" fill="#000000"/>
<rect x="299" y="654" width="2" height="14" fill="#8c8c8c"/>
<rect x="301" y="654" width="3" height="14" fill="#000000"/>
<rect x="304" y="654" width="1" height="14" fill="#8c8c8c"/>
<rect x="305" y="654" width="1" height="14" fill="#000000"/>
<rect x="306" y="654" width="28" height="14" fill="#8c8c8c"/>
<rect x="334" y="654" width="4" height="14" fill="#000000"/>
<rect x="338" y="654" width="1" height="14" fill="#8c8c8c"/>
<rect x="339" y="654" width="1" height="14" fill="#000000"/>
<rect x="341" y="654" width="2" height="14" fill="#000000"/>
<rect x="343" y="654" width="2" height="14" fill="#8c8c8c"/>
<rect x="345" y="654" width="4" height="14" fill="#000000"/>
<rect x="351" y="654" width="18" height="14" fill="#8c8c8c"/>
<rect x="475" y="654" width="2" height="14" fill="#000000"/>
<rect x="477" y="654" width="3" height="14" fill="#8c8c8c"/>
<rect x="480" y="654" width="1" height="14" fill="#505050"/>
<rect x="483" y="654" width="2" height="14" fill="#000000"/>
<rect x="486" y="654" width="1" height="14" fill="#8c8c8c"/>
<rect x="489" y="654" width="1" height="14" fill="#000000"/>
<rect x="490" y="654" width="4" height="14" fill="#dcdcdc"/>
<rect x="494" y="654" width="5" height="14" fill="#000000"/>
<rect x="499" y="654" width="2" height="14" fill="#8c8c8c"/>
<rect x="503" y="654" width="4" height="14" fill="#000000"/>
<rect x="508" y="654" width="9" height="14" fill="#8c8c8c"/>
<rect x="517" y="654" width="1" height="14" fill="#000000"/>
<rect x="520" y="654" width="3" height="14" fill="#dcdcdc"/>
<rect x="523" y="654" width="5" height="14" fill="#000000"/>
<rect x="528" y="654" width="4" height="14" fill="#8c8c8c"/>
<rect x="609" y="654" width="5" height="14" fill="#8c8c8c"/>
<rect x="614" y="654" width="1" height="14" fill="#000000"/>
<rect x="617" y="654" width="8" height="14" fill="#8c8c8c"/>
<rect x="625" y="654" width="2" height="14" fill="#dcdcdc"/>
<rect x="629" y="654" width="4" height="14" fill="#000000"/>
<rect x="633" y="654" width="4" height="14" fill="#dcdcdc"/>
<rect x="637" y="654" width="1" height="14" fill="#8c8c8c"/>
<rect x="638" y="654" width="2" height="14" fill="#000000"/>
<rect x="640" y="654" width="4" height="14" fill="#8c8c8c"/>
<rect x="644" y="654" width="2" height="14" fill="#000000"/>
<rect x="648" y="654" width="3" height="14" fill="#000000"/>
<rect x="652" y="654" width="7" height="14" fill="#000000"/>
<rect x="659" y="654" width="1" height="14" fill="#8c8c8c"/>
<rect x="660" y="654" width="2" height="14" fill="#000000"/>
<rect x="662" y="654" width="1" height="14" fill="#8c8c8c"/>
<rect x="663" y="654" width="3" height="14" fill="#dcdcdc"/>
<rect x="666" y="654" width="1" height="14" fill="#8c8c8c"/>
<rect x="667" y="654" width="4" height="14" fill="#000000"/>
<rect x="671" y="654" width="2" height="14" fill="#8c8c8c"/>
<rect x="673" y="654" width="2" height="14" fill="#000000"/>
<rect x="676" y="654" width="9" height="14" fill="#000000"/>
<rect x="685" y="654" width="2" height="14" fill="#8c8c8c"/>
<rect x="687" y="654" width="3" height="14" fill="#000000"/>
<rect x="691" y="654" width="2" height="14" fill="#000000"/>
<rect x="693" y="654" width="1" height="14" fill="#8c8c8c"/>
<rect x="694" y="654" width="6" height="14" fill="#000000"/>
<rect x="701" y="654" width="1" height="14" fill="#8c8c8c"/>
<rect x="704" y="654" width="4" height="14" fill="#000000"/>
<rect x="710" y="654" width="7" height="14" fill="#000000"/>
<rect x="717" y="654" width="1" height="14" fill="#8c8c8c"/>
<rect x="718" y="654" width="5" height="14" fill="#000000"/>
<rect x="723" y="654" width="1" height="14" fill="#8c8c8c"/>
<rect x="724" y="654" width="2" height="14" fill="#000000"/>
<rect x="727" y="654" width="3" height="14" fill="#000000"/>
<rect x="731" y="654" width="3" height="14" fill="#000000"/>
<rect x="734" y="654" width="2" height="14" fill="#dcdcdc"/>
<rect x="736" y="654" width="6" height="14" fill="#000000"/>
<rect x="744" y="654" width="3" height="14" fill="#8c8c8c"/>
<rect x="748" y="654" width="10" height="14" fill="#000000"/>
<rect x="758" y="654" width="4" height="14" fill="#8c8c8c"/>
<rect x="764" y="654" width="7" height="14" fill="#000000"/>
<rect x="771" y="654" width="1" height="14" fill="#dcdcdc"/>
<rect x="772" y="654" width="9" height="14" fill="#000000"/>
<rect x="781" y="654" width="2" height="14" fill="#8c8c8c"/>
<rect x="783" y="654" width="9" height="14" fill="#000000"/>
<rect x="794" y="654" width="3" height="14" fill="#000000"/>
<rect x="798" y="654" width="2" height="14" fill="#dcdcdc"/>
<rect x="800" y="654" width="3" height="14" fill="#000000"/>
<rect x="804" y="654" width="3" height="14" fill="#000000"/>
<rect x="808" y="654" width="3" height="14" fill="#000000"/>
<rect x="811" y="654" width="2" height="14" fill="#dcdcdc"/>
<rect x="813" y="654" width="2" height="14" fill="#8c8c8c"/>
<rect x="815" y="654" width="1" height="14" fill="#dcdcdc"/>
<rect x="816" y="654" width="3" height="14" fill="#8c8c8c"/>
<rect x="820" y="654" width="2" height="14" fill="#000000"/>
<rect x="822" y="654" width="2" height="14" fill="#8c8c8c"/>
<rect x="824" y="654" width="6" height="14" fill="#000000"/>
<rect x="831" y="654" width="4" height="14" fill="#000000"/>
<rect x="835" y="654" width="1" height="14" fill="#8c8c8c"/>
<rect x="836" y="654" width="7" height="14" fill="#000000"/>
<rect x="844" y="654" width="1" height="14" fill="#000000"/>
<rect x="846" y="654" width="1" height="14" fill="#000000"/>
<rect x="848" y="654" width="6" height="14" fill="#000000"/>
<rect x="857" y="654" width="3" height="14" fill="#000000"/>
<rect x="860" y="654" width="1" height="14" fill="#8c8c8c"/>
<rect x="861" y="654" width="3" height="14" fill="#000000"/>
<rect x="864" y="654" width="4" height="14" fill="#dcdcdc"/>
<rect x="868" y="654" width="2" height="14" fill="#000000"/>
<rect x="872" y="654" width="1" height="14" fill="#000000"/>
<rect x="873" y="654" width="1" height="14" fill="#8c8c8c"/>
<rect x="875" y="654" width="2" height="14" fill="#8c8c8c"/>
<rect x="877" y="654" width="4" height="14" fill="#000000"/>
<rect x="881" y="654" width="2" height="14" fill="#8c8c8c"/>
<rect x="884" y="654" width="2" height="14" fill="#000000"/>
<rect x="888" y="654" width="3" height="14" fill="#000000"/>
<rect x="891" y="654" width="2" height="14" fill="#8c8c8c"/>
<rect x="893" y="654" width="3" height="14" fill="#dcdcdc"/>
<rect x="896" y="654" width="3" height="14" fill="#8c8c8c"/>
<rect x="899" y="654" width="3" height="14" fill="#000000"/>
<rect x="903" y="654" width="5" height="14" fill="#000000"/>
<rect x="911" y="654" width="2" height="14" fill="#8c8c8c"/>
<rect x="913" y="654" width="4" height="14" fill="#000000"/>
<rect x="918" y="654" width="8" height="14" fill="#000000"/>
<rect x="926" y="654" width="3" height="14" fill="#8c8c8c"/>
<rect x="929" y="654" width="2" height="14" fill="#000000"/>
<rect x="933" y="654" width="3" height="14" fill="#8c8c8c"/>
<rect x="936" y="654" width="2" height="14" fill="#000000"/>
<rect x="938" y="654" width="1" height="14" fill="#dcdcdc"/>
<rect x="156" y="673" width="370" height="1" fill="#606060"/>
<rect x="156" y="678" width="370" height="1" fill="#606060"/>
<rect x="857" y="673" width="92" height="1" fill="#606060"/>
<rect x="857" y="678" width="92" height="1" fill="#606060"/>
<rect x="526" y="669" width="6" height="14" fill="#000000"/>
<rect x="533" y="669" width="3" height="14" fill="#000000"/>
<rect x="536" y="669" width="1" height="14" fill="#8c8c8c"/>
<rect x="537" y="669" width="1" height="14" fill="#000000"/>
<rect x="538" y="669" width="4" height="14" fill="#dcdcdc"/>
<rect x="542" y="669" width="1" height="14" fill="#000000"/>
<rect x="544" y="669" width="2" height="14" fill="#000000"/>
<rect x="546" y="669" width="4" height="14" fill="#8c8c8c"/>
<rect x="550" y="669" width="6" height="14" fill="#000000"/>
<rect x="556" y="669" width="2" height="14" fill="#8c8c8c"/>
<rect x="560" y="669" width="5" height="14" fill="#000000"/>
<rect x="566" y="669" width="14" height="14" fill="#000000"/>
<rect x="581" y="669" width="2" height="14" fill="#000000"/>
<rect x="584" y="669" width="6" height="14" fill="#8c8c8c"/>
<rect x="590" y="669" width="12" height="14" fill="#000000"/>
<rect x="603" y="669" width="1" height="14" fill="#000000"/>
<rect x="604" y="669" width="2" height="14" fill="#8c8c8c"/>
<rect x="606" y="669" width="2" height="14" fill="#dcdcdc"/>
<rect x="608" y="669" width="1" height="14" fill="#000000"/>
<rect x="609" y="669" width="5" height="14" fill="#8c8c8c"/>
<rect x="614" y="669" width="3" height="14" fill="#dcdcdc"/>
<rect x="617" y="669" width="3" height="14" fill="#000000"/>
<rect x="622" y="669" width="2" height="14" fill="#000000"/>
<rect x="624" y="669" width="1" height="14" fill="#dcdcdc"/>
<rect x="625" y="669" width="4" height="14" fill="#000000"/>
<rect x="629" y="669" width="3" height="14" fill="#8c8c8c"/>
<rect x="632" y="669" width="5" height="14" fill="#000000"/>
<rect x="638" y="669" width="2" height="14" fill="#000000"/>
<rect x="640" y="669" width="9" height="14" fill="#8c8c8c"/>
<rect x="649" y="669" width="2" height="14" fill="#000000"/>
<rect x="651" y="669" width="1" height="14" fill="#dcdcdc"/>
<rect x="652" y="669" width="6" height="14" fill="#000000"/>
<rect x="660" y="669" width="5" height="14" fill="#000000"/>
<rect x="665" y="669" width="1" height="14" fill="#8c8c8c"/>
<rect x="666" y="669" width="2" height="14" fill="#dcdcdc"/>
<rect x="668" y="669" width="3" height="14" fill="#000000"/>
<rect x="671" y="669" width="2" height="14" fill="#8c8c8c"/>
<rect x="673" y="669" width="2" height="14" fill="#dcdcdc"/>
<rect x="675" y="669" width="1" height="14" fill="#8c8c8c"/>
<rect x="677" y="669" width="2" height="14" fill="#000000"/>
<rect x="680" y="669" width="4" height="14" fill="#000000"/>
<rect x="684" y="669" width="3" height="14" fill="#8c8c8c"/>
<rect x="687" y="669" width="4" height="14" fill="#000000"/>
<rect x="693" y="669" width="1" height="14" fill="#8c8c8c"/>
<rect x="695" y="669" width="1" height="14" fill="#000000"/>
<rect x="699" y="669" width="9" height="14" fill="#000000"/>
<rect x="710" y="669" width="15" height="14" fill="#000000"/>
<rect x="725" y="669" width="1" height="14" fill="#8c8c8c"/>
<rect x="726" y="669" width="4" height="14" fill="#000000"/>
<rect x="731" y="669" width="4" height="14" fill="#000000"/>
<rect x="735" y="669" width="1" height="14" fill="#8c8c8c"/>
<rect x="736" y="669" width="4" height="14" fill="#000000"/>
<rect x="740" y="669" width="2" height="14" fill="#8c8c8c"/>
<rect x="744" y="669" width="2" height="14" fill="#8c8c8c"/>
<rect x="746" y="669" width="6" height="14" fill="#000000"/>
<rect x="752" y="669" width="3" height="14" fill="#8c8c8c"/>
<rect x="755" y="669" width="4" height="14" fill="#000000"/>
<rect x="760" y="669" width="7" height="14" fill="#000000"/>
<rect x="768" y="669" width="3" height="14" fill="#000000"/>
<rect x="772" y="669" width="1" height="14" fill="#000000"/>
<rect x="774" y="669" width="9" height="14" fill="#000000"/>
<rect x="783" y="669" width="1" height="14" fill="#8c8c8c"/>
<rect x="784" y="669" width="10" height="14" fill="#000000"/>
<rect x="795" y="669" width="15" height="14" fill="#000000"/>
<rect x="810" y="669" width="1" height="14" fill="#8c8c8c"/>
<rect x="811" y="669" width="3" height="14" fill="#000000"/>
<rect x="814" y="669" width="1" height="14" fill="#8c8c8c"/>
<rect x="815" y="669" width="3" height="14" fill="#dcdcdc"/>
<rect x="818" y="669" width="1" height="14" fill="#000000"/>
<rect x="820" y="669" width="2" height="14" fill="#000000"/>
<rect x="823" y="669" width="3" height="14" fill="#000000"/>
<rect x="826" y="669" width="1" height="14" fill="#8c8c8c"/>
<rect x="827" y="669" width="4" height="14" fill="#000000"/>
<rect x="832" y="669" width="2" height="14" fill="#8c8c8c"/>
<rect x="834" y="669" width="1" height="14" fill="#000000"/>
<rect x="835" y="669" width="2" height="14" fill="#8c8c8c"/>
<rect x="837" y="669" width="1" height="14" fill="#000000"/>
<rect x="839" y="669" width="3" height="14" fill="#000000"/>
<rect x="844" y="669" width="4" height="14" fill="#000000"/>
<rect x="851" y="669" width="2" height="14" fill="#000000"/>
<rect x="853" y="669" width="2" height="14" fill="#8c8c8c"/>
<rect x="855" y="669" width="2" height="14" fill="#dcdcdc"/>
</g>
<rect class="c" x="156" y="744" width="250" height="15" fill="#000"/>
<defs><filter id="tf" x="0" y="0" width="950" height="775" filterUnits="userSpaceOnUse" color-interpolation-filters="sRGB"><feOffset dx="0" dy="0"/></filter></defs>
<g filter="url(#tf)">
<text x="151.8" y="13" text-anchor="end" fill="#000" stroke="#000" font-size="13">Window Position</text>
<text x="151.8" y="30" text-anchor="end" fill="#000" stroke="#000" font-size="13">Scale</text>
<text x="151.8" y="47" text-anchor="end" fill="#000" stroke="#000" font-size="13">chr19:</text>
<text x="346.2" y="12" text-anchor="start" fill="#000" stroke="#000" font-size="13" textLength="196.8" lengthAdjust="spacingAndGlyphs">Human Feb. 2009 (GRCh37/hg19)</text>
<text x="554.4" y="12" text-anchor="start" fill="#000" stroke="#000" font-size="13" textLength="205" lengthAdjust="spacingAndGlyphs">chr19:2,624,357-2,625,055 (699 bp)</text>
<text x="435.6" y="29" text-anchor="end" fill="#000" stroke="#000" font-size="13">200 bases</text>
<text x="675" y="29" text-anchor="start" fill="#000" stroke="#000" font-size="13">hg19</text>
<text x="317.4" y="47" text-anchor="end" fill="#000" stroke="#000" font-size="13" textLength="56.8" lengthAdjust="spacingAndGlyphs">2,624,500</text>
<text x="430.4" y="47" text-anchor="end" fill="#000" stroke="#000" font-size="13" textLength="56.8" lengthAdjust="spacingAndGlyphs">2,624,600</text>
<text x="544.4" y="47" text-anchor="end" fill="#000" stroke="#000" font-size="13" textLength="56.8" lengthAdjust="spacingAndGlyphs">2,624,700</text>
<text x="657.4" y="47" text-anchor="end" fill="#000" stroke="#000" font-size="13" textLength="56.8" lengthAdjust="spacingAndGlyphs">2,624,800</text>
<text x="771.4" y="47" text-anchor="end" fill="#000" stroke="#000" font-size="13" textLength="56.8" lengthAdjust="spacingAndGlyphs">2,624,900</text>
<text x="885.4" y="47" text-anchor="end" fill="#000" stroke="#000" font-size="13" textLength="56.8" lengthAdjust="spacingAndGlyphs">2,625,000</text>
<text x="552.5" y="63" text-anchor="middle" fill="#000" stroke="#000" font-size="13" textLength="241.5" lengthAdjust="spacingAndGlyphs">GENCODE V49lift37 (1 items filtered out)</text>
<text x="151.8" y="77" text-anchor="end" fill="#0c0c78" stroke="#0c0c78" font-size="13" textLength="36.2" lengthAdjust="spacingAndGlyphs">GNG7</text>
<text x="151.8" y="93" text-anchor="end" fill="#0c0c78" stroke="#0c0c78" font-size="13" textLength="36.2" lengthAdjust="spacingAndGlyphs">GNG7</text>
<text x="151.8" y="109" text-anchor="end" fill="#0c0c78" stroke="#0c0c78" font-size="13" textLength="36.2" lengthAdjust="spacingAndGlyphs">GNG7</text>
<text x="151.8" y="125" text-anchor="end" fill="#0c0c78" stroke="#0c0c78" font-size="13" textLength="36.2" lengthAdjust="spacingAndGlyphs">GNG7</text>
<text x="151.8" y="141" text-anchor="end" fill="#0c0c78" stroke="#0c0c78" font-size="13" textLength="36.2" lengthAdjust="spacingAndGlyphs">GNG7</text>
<text x="151.8" y="157" text-anchor="end" fill="#0c0c78" stroke="#0c0c78" font-size="13" textLength="36.2" lengthAdjust="spacingAndGlyphs">GNG7</text>
<text x="151.8" y="173" text-anchor="end" fill="#0c0c78" stroke="#0c0c78" font-size="13" textLength="36.2" lengthAdjust="spacingAndGlyphs">GNG7</text>
<text x="151.8" y="189" text-anchor="end" fill="#0c0c78" stroke="#0c0c78" font-size="13" textLength="36.2" lengthAdjust="spacingAndGlyphs">GNG7</text>
<text x="151.8" y="205" text-anchor="end" fill="#0c0c78" stroke="#0c0c78" font-size="13" textLength="36.2" lengthAdjust="spacingAndGlyphs">GNG7</text>
<text x="151.8" y="221" text-anchor="end" fill="#0c0c78" stroke="#0c0c78" font-size="13" textLength="36.2" lengthAdjust="spacingAndGlyphs">GNG7</text>
<text x="151.8" y="237" text-anchor="end" fill="#0c0c78" stroke="#0c0c78" font-size="13" textLength="36.2" lengthAdjust="spacingAndGlyphs">GNG7</text>
<text x="151.8" y="253" text-anchor="end" fill="#1270ac" stroke="#1270ac" font-size="13" textLength="36.2" lengthAdjust="spacingAndGlyphs">GNG7</text>
<text x="552.5" y="269" text-anchor="middle" fill="#000" stroke="#000" font-size="10.8">RefSeq genes from NCBI</text>
<text x="151.8" y="284" text-anchor="end" fill="#0c0c78" stroke="#0c0c78" font-size="13" textLength="91.8" lengthAdjust="spacingAndGlyphs">RefSeq Curated</text>
<text x="552.5" y="300" text-anchor="middle" fill="#000" stroke="#000" font-size="10.8" textLength="215.3" lengthAdjust="spacingAndGlyphs">Publications: Sequences in Scientific Articles</text>
<text x="151.8" y="315" text-anchor="end" fill="#000" stroke="#000" font-size="13">Sequences</text>
<text x="151.8" y="331" text-anchor="end" fill="#000" stroke="#000" font-size="13">SNPs</text>
<text x="552.5" y="348" text-anchor="middle" fill="#005000" stroke="#005000" font-size="13">OMIM Gene Phenotypes - Dark Green Can Be Disease-causing</text>
<text x="151.8" y="362" text-anchor="end" fill="#005000" stroke="#005000" font-size="13">OMIM Genes</text>
<text x="552.5" y="378" text-anchor="middle" fill="#000" stroke="#000" font-size="10.8" textLength="231.8" lengthAdjust="spacingAndGlyphs">Short Genetic Variants from dbSNP release 155</text>
<text x="151.8" y="393" text-anchor="end" fill="#000" stroke="#000" font-size="13" textLength="126.2" lengthAdjust="spacingAndGlyphs">Common dbSNP(155)</text>
<text x="552.5" y="410" text-anchor="middle" fill="#000" stroke="#000" font-size="13" textLength="574.5" lengthAdjust="spacingAndGlyphs">Gene Expression in 54 tissues from GTEx RNA-seq of 17382 samples, 948 donors (V8, Aug 2019)</text>
<text x="151.8" y="460" text-anchor="end" fill="#000" stroke="#000" font-size="13" textLength="36.2" lengthAdjust="spacingAndGlyphs">GNG7</text>
<text x="552.5" y="510" text-anchor="middle" fill="#000" stroke="#000" font-size="13" textLength="542" lengthAdjust="spacingAndGlyphs">H3K27Ac Mark (Often Found Near Active Regulatory Elements) on 7 cell lines from ENCODE</text>
<text x="12.8" y="524" text-anchor="start" fill="#000" stroke="#000" font-size="13" textLength="104.8" lengthAdjust="spacingAndGlyphs">Layered H3K27Ac</text>
<text x="405.6" y="556" text-anchor="start" fill="#3c3c8c" stroke="#3c3c8c" font-size="13" textLength="292.8" lengthAdjust="spacingAndGlyphs">100 vertebrates Basewise Conservation by PhyloP</text>
<text x="141" y="555" text-anchor="end" fill="#3c3c8c" stroke="#3c3c8c" font-size="13">4.88</text>
<text x="152.5" y="553.6" text-anchor="end" fill="#3c3c8c" stroke="#3c3c8c" font-size="13">_</text>
<text x="12.8" y="580" text-anchor="start" fill="#3c3c8c" stroke="#3c3c8c" font-size="13">100 Vert. Cons</text>
<text x="141" y="605" text-anchor="end" fill="#8c3c3c" stroke="#8c3c3c" font-size="13">-4.5</text>
<text x="152.5" y="603.6" text-anchor="end" fill="#8c3c3c" stroke="#8c3c3c" font-size="13">_</text>
<text x="552.5" y="622" text-anchor="middle" fill="#000a64" stroke="#000a64" font-size="13" textLength="215" lengthAdjust="spacingAndGlyphs">Multiz Alignments of 100 Vertebrates</text>
<text x="151.8" y="636" text-anchor="end" fill="#000a64" stroke="#000a64" font-size="13">Rhesus</text>
<text x="151.8" y="651" text-anchor="end" fill="#005a0a" stroke="#005a0a" font-size="13">Mouse</text>
<text x="151.8" y="666" text-anchor="end" fill="#000a64" stroke="#000a64" font-size="13">Dog</text>
<text x="151.8" y="681" text-anchor="end" fill="#005a0a" stroke="#005a0a" font-size="13">Elephant</text>
<text x="151.8" y="696" text-anchor="end" fill="#005a0a" stroke="#005a0a" font-size="13">Chicken</text>
<text x="151.8" y="711" text-anchor="end" fill="#000a64" stroke="#000a64" font-size="13">X_tropicalis</text>
<text x="151.8" y="726" text-anchor="end" fill="#005a0a" stroke="#005a0a" font-size="13">Zebrafish</text>
<text x="552.5" y="742" text-anchor="middle" fill="#000" stroke="#000" font-size="13">Repeating Elements by RepeatMasker</text>
<text x="151.8" y="756" text-anchor="end" fill="#000" stroke="#000" font-size="13" textLength="84" lengthAdjust="spacingAndGlyphs">RepeatMasker</text>
</g>
</svg></body></html>
